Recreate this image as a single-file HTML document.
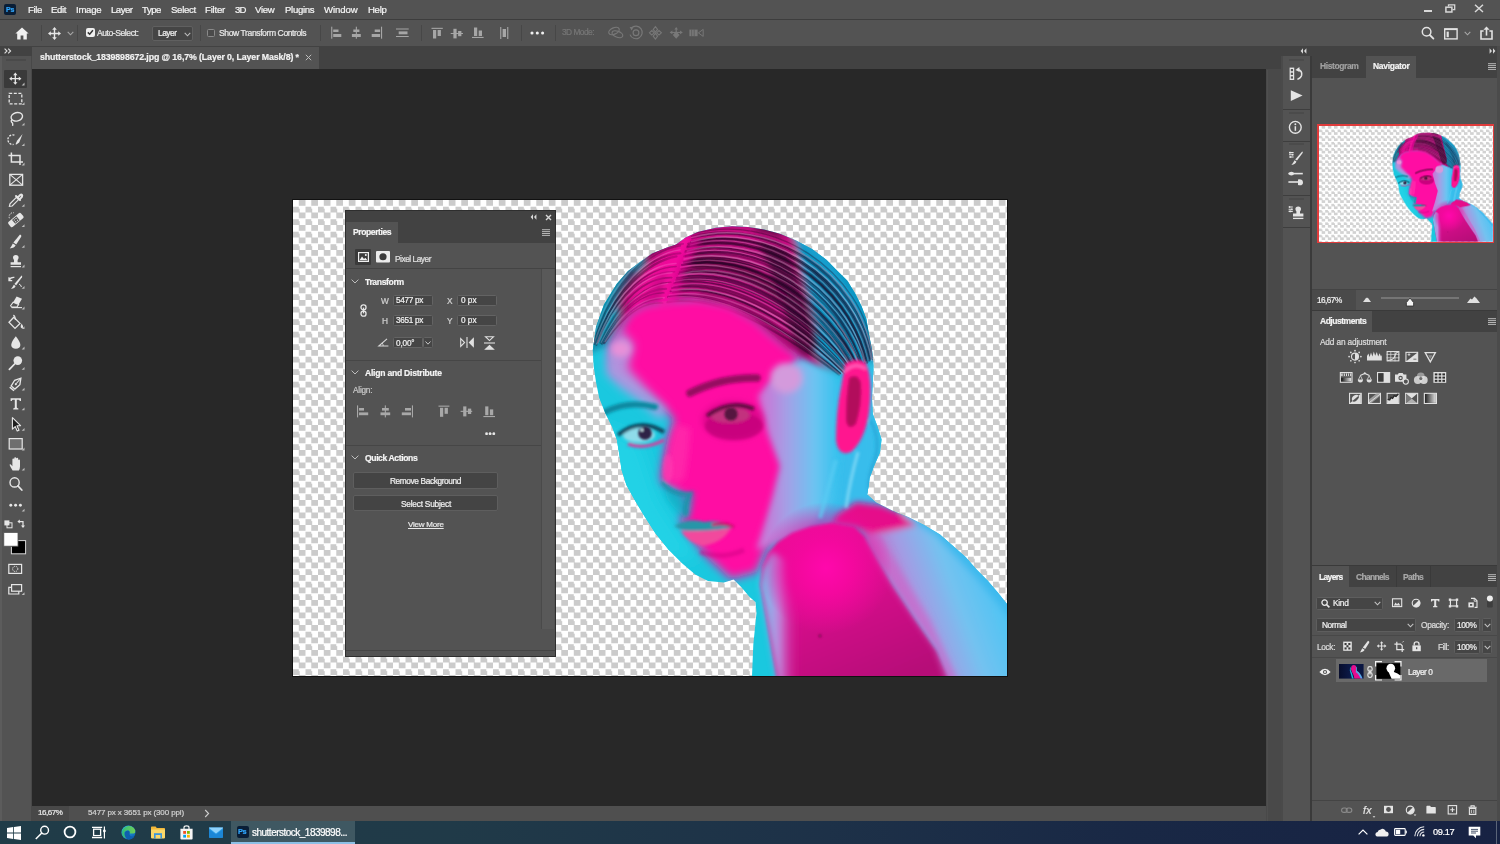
<!DOCTYPE html>
<html><head><meta charset="utf-8"><title>Photoshop</title>
<style>
*{box-sizing:border-box;margin:0;padding:0}
html,body{width:1500px;height:844px;overflow:hidden;background:#282828;font-family:"Liberation Sans","DejaVu Sans",sans-serif;font-size:9px;color:#e6e6e6}
.t{position:absolute;white-space:nowrap;display:block;will-change:transform}
.b{position:absolute}
svg{position:absolute;overflow:visible}

</style></head><body>
<svg style="left:293px;top:200px" width="714" height="476" viewBox="293 200 714 476">
<defs>
<clipPath id="sil"><path d="M592.8,350 L596,327 L604,304.6 L616.8,283.8 L628,271 L640.8,261.4 L652,253.4 L666.4,247.8 L676,244.6 L685.6,237.4 L698.4,231.8 L716,227.8 L732,226.2 L748,227 L764,229.4 L780,233.8 L796,240.5 L812,249 L826.4,259.8 L836,269.4 L847.2,280.6 L855.2,293.4 L861.6,306.2 L866.4,319 L868.8,333.4 L872,350 L873.6,366 L872.8,382 L872,398 L872.8,414 L877.6,426.8 L881.6,439.6 L880,452.4 L874.4,465.2 L869.6,478 L868.8,485 L867.2,494.6 L876,502.6 L892,510.6 L908,517 L924,525 L940,534.6 L952.8,545.8 L965.6,557 L976.8,569.8 L988,581 L997.6,592.2 L1007,604 L1007,676 L752,676 L753.3,644.7 L756.5,612.7 L755.5,602 L749.6,597 L741.6,587.4 L733.6,579.4 L724,582.6 L708,581 L695.2,574.6 L682.4,563.4 L668,549 L655.2,533 L644,515.4 L634.4,499.4 L626.4,485 L621.6,470 L619.2,454 L616.8,439.6 L612,426.8 L605.6,414 L599.2,398 L596,382 L593.6,366 Z"/></clipPath>
<clipPath id="hairclip"><path d="M580,352 L610,343 L628,315 L644,305 L670,300 L697,298 L729,304 L755,319 L772,334 L789,351 L802,368 L815,381 L836,398 L846,366 L862,356 L890,370 L890,210 L580,210 Z"/></clipPath>
<filter id="pb8" x="-20%" y="-20%" width="140%" height="140%"><feGaussianBlur stdDeviation="8"/></filter>
<filter id="pb5" x="-20%" y="-20%" width="140%" height="140%"><feGaussianBlur stdDeviation="5"/></filter>
<filter id="pb4" x="-20%" y="-20%" width="140%" height="140%"><feGaussianBlur stdDeviation="3.2"/></filter>
<filter id="pb2" x="-20%" y="-20%" width="140%" height="140%"><feGaussianBlur stdDeviation="1.5"/></filter>
<filter id="pb1" x="-20%" y="-20%" width="140%" height="140%"><feGaussianBlur stdDeviation="0.6"/></filter>
<filter id="pb1b" x="-30%" y="-30%" width="160%" height="160%"><feGaussianBlur stdDeviation="1.1"/></filter>
<radialGradient id="glow" cx="826" cy="568" r="66" gradientUnits="userSpaceOnUse"><stop offset="0" stop-color="#ff08ac"/><stop offset="0.4" stop-color="#f4089e"/><stop offset="1" stop-color="#f0089c" stop-opacity="0"/></radialGradient>
<linearGradient id="shg" x1="800" y1="520" x2="870" y2="690" gradientUnits="userSpaceOnUse"><stop offset="0" stop-color="#ee0898"/><stop offset="0.5" stop-color="#d4088a"/><stop offset="1" stop-color="#b60878"/></linearGradient>
<linearGradient id="cheek" x1="760" y1="0" x2="838" y2="0" gradientUnits="userSpaceOnUse"><stop offset="0" stop-color="#d070d4"/><stop offset="0.35" stop-color="#a3a0e6"/><stop offset="0.7" stop-color="#6cc4f2"/><stop offset="1" stop-color="#34c2ee"/></linearGradient>
<linearGradient id="backg" x1="880" y1="600" x2="990" y2="560" gradientUnits="userSpaceOnUse"><stop offset="0" stop-color="#d050b8"/><stop offset="0.3" stop-color="#a59ae3"/><stop offset="0.62" stop-color="#74c2f0"/><stop offset="1" stop-color="#4cc4f4"/></linearGradient>
<linearGradient id="lband" x1="762" y1="0" x2="800" y2="0" gradientUnits="userSpaceOnUse"><stop offset="0" stop-color="#6cc4f0"/><stop offset="0.45" stop-color="#c088dc"/><stop offset="1" stop-color="#e0088f" stop-opacity="0"/></linearGradient>
</defs>
<g id="photo" clip-path="url(#sil)">
<rect x="580" y="215" width="440" height="470" fill="#1ac8df"/>
<g filter="url(#pb8)">
 <path d="M815,385 L880,360 L890,520 L830,530 L790,540 Z" fill="#38bdec"/>
 <path d="M590,420 L640,440 L660,500 L700,560 L650,560 L600,470 Z" fill="#22d2e6"/>
</g>
<!-- hair -->
<g filter="url(#pb4)">
 <path d="M580,356 L610,345 L628,317 L644,307 L670,302 L697,300 L729,306 L755,321 L772,336 L789,350 L804,361 L820,369 L834,374 L846,366 L862,356 L890,370 L890,210 L580,210 Z" fill="#b80a7a"/>
 <path d="M788,210 L799,262 L808,300 L816,331 L812,350 L824,368 L838,376 L846,362 L890,362 L890,210 Z" fill="#0e93c0"/>
 <path d="M766,230 Q788,280 806,344" fill="none" stroke="#3a0832" stroke-width="24" opacity="0.72" stroke-linecap="round"/>
 <path d="M580,356 L610,345 L621,317 L621,295 L647,262 L636,238 L592,285 L578,340 Z" fill="#0c8fae"/>
 <path d="M664,303 L672,268 L687,238" fill="none" stroke="#f80aa0" stroke-width="9" stroke-linecap="round"/>
 <path d="M636,302 L652,274 L670,256" fill="none" stroke="#ea0a96" stroke-width="13" stroke-linecap="round"/>
 <path d="M700,237 Q745,225 796,250" fill="none" stroke="#cc0a86" stroke-width="8"/>
 <path d="M692,262 Q745,258 784,300" fill="none" stroke="#5e0640" stroke-width="15" opacity="0.7"/>
 <path d="M698,296 Q744,300 792,350" fill="none" stroke="#7a0852" stroke-width="12" opacity="0.65"/>
 <path d="M634,270 Q622,288 616,310" fill="none" stroke="#6a0848" stroke-width="8" opacity="0.55"/>
 <path d="M812,270 Q840,300 850,350" fill="none" stroke="#0a6088" stroke-width="10" opacity="0.6"/>
 <path d="M800,240 Q850,280 866,340" fill="none" stroke="#15a6d6" stroke-width="7" opacity="0.8"/>
</g>
<g fill="none" stroke-linecap="round" filter="url(#pb1)">
<path d="M667.0,302.5 C720.7,294.1 787.6,336.7 838.0,373.6" stroke="#1a0420" stroke-width="1.8" opacity="0.27"/>
<path d="M668.2,301.9 C721.7,291.8 789.6,338.2 838.8,374.4" stroke="#1a0420" stroke-width="2.6" opacity="0.26"/>
<path d="M668.2,297.0 C725.6,288.9 791.9,334.0 840.0,373.4" stroke="#1a0420" stroke-width="2.3" opacity="0.46"/>
<path d="M670.4,296.3 C727.4,287.8 793.7,333.5 839.9,373.3" stroke="#1a0420" stroke-width="2.3" opacity="0.30"/>
<path d="M672.8,292.7 C729.4,281.5 798.8,328.8 844.4,373.6" stroke="#1a0420" stroke-width="1.6" opacity="0.37"/>
<path d="M670.5,291.3 C728.9,280.1 798.4,327.8 842.6,371.6" stroke="#1a0420" stroke-width="1.7" opacity="0.51"/>
<path d="M671.9,288.1 C731.0,278.1 802.7,323.6 843.5,371.4" stroke="#1a0420" stroke-width="1.7" opacity="0.42"/>
<path d="M674.3,286.8 C733.8,276.0 803.6,323.2 847.1,372.2" stroke="#1a0420" stroke-width="2.3" opacity="0.37"/>
<path d="M674.1,283.1 C736.2,273.2 806.3,319.0 847.0,370.1" stroke="#1a0420" stroke-width="1.4" opacity="0.50"/>
<path d="M675.3,282.2 C735.5,268.9 809.4,316.6 849.6,369.0" stroke="#1a0420" stroke-width="1.2" opacity="0.54"/>
<path d="M676.5,280.3 C738.3,265.9 813.9,315.9 851.2,370.2" stroke="#1a0420" stroke-width="2.3" opacity="0.47"/>
<path d="M676.9,278.0 C738.2,264.1 813.4,312.6 851.2,370.4" stroke="#1a0420" stroke-width="1.8" opacity="0.53"/>
<path d="M678.9,273.8 C742.6,262.7 818.6,310.6 852.4,367.2" stroke="#1a0420" stroke-width="2.3" opacity="0.35"/>
<path d="M680.1,273.1 C743.0,260.8 820.2,307.2 852.2,366.7" stroke="#1a0420" stroke-width="2.5" opacity="0.49"/>
<path d="M679.6,271.5 C746.6,254.9 822.2,304.3 854.2,367.2" stroke="#1a0420" stroke-width="1.6" opacity="0.38"/>
<path d="M681.3,269.1 C746.1,255.0 825.0,303.9 856.7,366.8" stroke="#1a0420" stroke-width="1.9" opacity="0.41"/>
<path d="M682.2,265.0 C748.9,250.0 826.9,301.4 857.2,366.1" stroke="#1a0420" stroke-width="2.3" opacity="0.52"/>
<path d="M682.2,264.8 C749.8,249.6 828.9,299.3 857.9,366.9" stroke="#1a0420" stroke-width="2.2" opacity="0.51"/>
<path d="M683.9,262.8 C751.1,245.9 833.0,294.8 860.8,366.2" stroke="#1a0420" stroke-width="1.5" opacity="0.54"/>
<path d="M683.5,261.9 C754.0,242.7 833.7,294.6 859.9,363.5" stroke="#1a0420" stroke-width="1.6" opacity="0.47"/>
<path d="M683.8,256.3 C755.9,239.7 835.8,291.5 863.0,364.7" stroke="#1a0420" stroke-width="1.6" opacity="0.29"/>
<path d="M685.6,256.1 C755.5,236.4 840.0,289.2 861.7,364.5" stroke="#1a0420" stroke-width="2.1" opacity="0.49"/>
<path d="M685.1,252.1 C757.1,234.0 841.4,286.3 865.1,362.0" stroke="#1a0420" stroke-width="1.9" opacity="0.30"/>
<path d="M685.4,250.8 C758.2,233.7 843.9,284.3 865.1,363.5" stroke="#1a0420" stroke-width="1.3" opacity="0.50"/>
<path d="M687.5,247.1 C760.8,228.0 847.8,281.4 865.7,360.2" stroke="#1a0420" stroke-width="2.4" opacity="0.51"/>
<path d="M688.0,246.0 C762.6,227.1 848.0,280.1 867.0,362.4" stroke="#1a0420" stroke-width="2.6" opacity="0.41"/>
<path d="M688.4,243.8 C763.8,222.6 851.3,276.8 869.3,360.4" stroke="#1a0420" stroke-width="2.3" opacity="0.45"/>
<path d="M691.4,241.9 C766.1,223.2 852.9,276.2 870.5,358.5" stroke="#1a0420" stroke-width="2.4" opacity="0.52"/>
<path d="M692.0,238.5 C767.4,217.1 856.8,271.3 872.7,359.3" stroke="#1a0420" stroke-width="2.1" opacity="0.44"/>
<path d="M691.9,236.3 C770.8,217.1 858.9,271.0 873.0,357.4" stroke="#1a0420" stroke-width="2.2" opacity="0.33"/>
<path d="M693.4,233.7 C770.9,212.3 862.7,267.4 874.2,356.5" stroke="#1a0420" stroke-width="1.3" opacity="0.33"/>
<path d="M662.7,303.1 C644.4,301.7 625.8,311.7 604.8,343.2" stroke="#1a0420" stroke-width="1.4" opacity="0.37"/>
<path d="M662.2,298.2 C646.3,299.1 624.7,308.9 604.1,343.6" stroke="#1a0420" stroke-width="1.5" opacity="0.28"/>
<path d="M664.0,292.9 C645.7,292.1 622.4,306.4 603.2,343.5" stroke="#1a0420" stroke-width="1.2" opacity="0.32"/>
<path d="M666.3,288.7 C646.9,288.9 621.4,303.7 602.2,344.2" stroke="#1a0420" stroke-width="1.9" opacity="0.23"/>
<path d="M671.0,282.2 C647.7,282.2 621.7,302.2 601.3,343.7" stroke="#1a0420" stroke-width="1.3" opacity="0.32"/>
<path d="M671.8,277.6 C646.4,276.9 620.7,297.8 600.2,342.8" stroke="#1a0420" stroke-width="1.6" opacity="0.32"/>
<path d="M674.6,271.8 C647.4,270.8 616.8,294.1 598.3,342.3" stroke="#1a0420" stroke-width="1.5" opacity="0.21"/>
<path d="M676.2,266.5 C647.7,267.5 616.6,292.7 597.2,342.5" stroke="#1a0420" stroke-width="1.5" opacity="0.37"/>
<path d="M676.4,256.3 C649.2,261.5 614.4,289.3 594.4,343.8" stroke="#1a0420" stroke-width="2.3" opacity="0.34"/>
<path d="M680.5,253.3 C647.7,255.9 613.6,287.7 596.4,345.0" stroke="#1a0420" stroke-width="2.0" opacity="0.33"/>
<path d="M680.4,245.7 C649.5,250.7 611.4,282.7 593.9,343.2" stroke="#1a0420" stroke-width="1.6" opacity="0.26"/>
<path d="M683.5,243.8 C649.7,245.7 609.9,282.7 593.2,344.3" stroke="#1a0420" stroke-width="1.2" opacity="0.26"/>
<path d="M668.6,297.6 C723.3,289.4 792.6,333.6 840.0,374.6" stroke="#ffd0f4" stroke-width="1.3" opacity="0.27"/>
<path d="M669.4,295.1 C728.3,285.2 797.3,329.7 842.6,373.4" stroke="#ffd0f4" stroke-width="1.5" opacity="0.25"/>
<path d="M672.2,290.6 C731.8,281.0 801.8,325.3 843.9,371.6" stroke="#ffd0f4" stroke-width="1.7" opacity="0.33"/>
<path d="M672.9,286.1 C732.8,273.0 805.1,320.0 846.3,369.5" stroke="#ffd0f4" stroke-width="1.0" opacity="0.20"/>
<path d="M674.7,281.3 C736.2,268.9 812.5,317.3 849.8,369.0" stroke="#ffd0f4" stroke-width="1.3" opacity="0.21"/>
<path d="M679.0,275.8 C740.4,262.1 815.5,310.2 852.2,369.7" stroke="#ffd0f4" stroke-width="1.7" opacity="0.26"/>
<path d="M680.0,274.0 C744.5,257.9 820.7,306.1 852.4,368.9" stroke="#ffd0f4" stroke-width="1.5" opacity="0.26"/>
<path d="M680.4,267.2 C745.7,254.0 824.4,302.6 856.8,366.6" stroke="#ffd0f4" stroke-width="1.3" opacity="0.26"/>
<path d="M681.9,263.1 C752.5,247.7 830.1,296.0 858.8,363.8" stroke="#ffd0f4" stroke-width="1.2" opacity="0.19"/>
<path d="M684.1,259.1 C752.5,241.8 835.6,293.4 859.7,365.6" stroke="#ffd0f4" stroke-width="1.6" opacity="0.34"/>
<path d="M686.7,253.4 C758.4,236.7 839.7,288.8 864.7,362.3" stroke="#ffd0f4" stroke-width="1.1" opacity="0.26"/>
<path d="M687.4,251.0 C760.5,231.1 846.1,285.1 865.5,362.8" stroke="#ffd0f4" stroke-width="1.6" opacity="0.28"/>
<path d="M690.4,245.1 C763.6,224.4 849.9,279.1 868.3,359.8" stroke="#ffd0f4" stroke-width="1.4" opacity="0.18"/>
<path d="M691.5,241.8 C766.6,220.1 855.6,275.1 871.8,360.5" stroke="#ffd0f4" stroke-width="1.5" opacity="0.32"/>
<path d="M691.6,237.6 C769.7,216.0 861.4,269.9 872.6,358.4" stroke="#ffd0f4" stroke-width="1.5" opacity="0.30"/>
<path d="M664.4,297.7 C644.4,296.9 624.3,309.8 605.1,341.5" stroke="#ffd0f4" stroke-width="1.5" opacity="0.22"/>
<path d="M667.7,283.3 C645.3,286.1 620.7,304.0 601.2,342.2" stroke="#ffd0f4" stroke-width="1.3" opacity="0.18"/>
<path d="M672.0,272.8 C646.8,273.9 617.9,295.4 598.2,342.6" stroke="#ffd0f4" stroke-width="1.5" opacity="0.22"/>
<path d="M676.0,263.5 C649.3,264.4 615.2,291.0 596.8,343.7" stroke="#ffd0f4" stroke-width="1.6" opacity="0.28"/>
<path d="M680.2,249.8 C650.0,253.5 614.1,286.1 593.9,343.3" stroke="#ffd0f4" stroke-width="1.2" opacity="0.25"/>
<path d="M683.8,239.3 C650.5,245.3 609.2,278.6 591.5,344.8" stroke="#ffd0f4" stroke-width="1.4" opacity="0.18"/>
</g>

<g filter="url(#pb4)">
 <path d="M672,300 L680,268 L695,240" fill="none" stroke="#f40a9e" stroke-width="10" stroke-linecap="round" opacity="0.6"/>
 <path d="M652,296 L662,272 L676,254" fill="none" stroke="#f40a9e" stroke-width="9" stroke-linecap="round" opacity="0.45"/>
</g>
<!-- face -->
<g filter="url(#pb5)">
 <path d="M610,347 L629,313 L644,304 L670,300 L697,298 L729,304 L755,319 L772,334 L789,348 L802,358 L770,392 L778,434 L788,466 L782,498 L774,519 L767,546 L757,572 L731,579 L706,556 L691,536 L680,519 L687,511 L682,494 L661,481 L663,464 L667,440 L674,419 L652,400 L635,389 L612,372 Z" fill="#ff0aa3"/>
</g>
<g filter="url(#pb5)">
 <path d="M606,352 L622,330 L634,345 L628,368 L650,392 L668,410 L660,420 L640,402 L620,388 L606,374 Z" fill="#a8a4e6" opacity="0.85"/>
</g>
<g filter="url(#pb4)">
 <path d="M802,360 L820,368 L838,376 L840,455 L836,500 L804,534 L756,550 L766,519 L772,498 L780,466 L768,434 L758,396 L782,366 Z" fill="url(#cheek)"/>
 <ellipse cx="621" cy="349" rx="10" ry="8" fill="#e890d8"/>
 <ellipse cx="786" cy="378" rx="16" ry="15" fill="#d49adc"/>
</g>
<g filter="url(#pb4)">
 <ellipse cx="733" cy="420" rx="31" ry="19" fill="#c40a7a" opacity="0.5"/>
 <path d="M676,424 Q668,452 664,478 Q672,486 684,480 Q690,452 690,428 Z" fill="#ff2cac" opacity="0.7"/>
 <path d="M662,484 Q676,498 694,492 Q692,508 688,520 Q676,512 668,500 Z" fill="#12a9c0" opacity="0.7"/>
</g>
<!-- body -->
<g filter="url(#pb4)">
 <path d="M862,530 L900,512 L930,524 L968,556 L1015,600 L1015,690 L950,690 L935,649 L913,617 L892,585 L877,560 Z" fill="url(#backg)"/>
 <path d="M838,514 L856,502 L880,505 L906,515 L920,524 L900,529 L872,534 L854,527 L832,523.5 Z" fill="#e6088a"/>
 <path d="M900,506 L930,518 L972,552 L1015,598 L1015,624 L975,577 L935,535 L905,518 Z" fill="#3cb9ee"/>
</g>
<g filter="url(#pb2)">
 <path d="M762,566 L768,553 L778,542 L792,533 L811,526.5 L832,523 L854,526.5 L864,536 L879,562 L894,587 L915,619 L937,651 L954,690 L779,690 L764,607 L760,585 Z" fill="url(#shg)"/>
</g>
<g filter="url(#pb4)">
 <path d="M763,568 L772,552 L786,560 L788,585 L802,628 L812,690 L779,690 L764,607 L760,585 Z" fill="url(#lband)"/>
 <path d="M866,538 L880,536 L900,570 L930,620 L962,690 L950,690 L935,649 L913,617 L892,585 L877,560 Z" fill="#c86ccc" opacity="0.8"/>
</g>
<ellipse cx="826" cy="568" rx="66" ry="66" fill="url(#glow)"/>
<!-- details -->
<g filter="url(#pb2)">
 <path d="M845,364 Q857,356 866,363 Q873,380 869,412 Q865,440 851,452 Q838,457 836,440 Q836,412 841,388 Z" fill="#ff128f"/>
 <path d="M849,378 Q858,372 861,384 Q862,405 856,424 Q848,432 846,420 Q846,396 849,378 Z" fill="#b20a5c"/>
 <path d="M844,372 Q855,361 866,369" fill="none" stroke="#ff5cb8" stroke-width="3"/>
 <ellipse cx="734" cy="426" rx="29" ry="14" fill="#c00878" opacity="0.75"/>
 <path d="M690,393 Q722,377 757,378" fill="none" stroke="#960a60" stroke-width="7.5" stroke-linecap="round"/>
 <path d="M605,412 Q628,400 655,407" fill="none" stroke="#0f88a0" stroke-width="6" stroke-linecap="round"/>
 <ellipse cx="639" cy="435" rx="16" ry="7.5" fill="#8fdcea"/>
 <path d="M618,435 Q640,417 664,432" fill="none" stroke="#083c54" stroke-width="4"/>
 <path d="M628,444 Q646,450 664,440" fill="none" stroke="#e83098" stroke-width="3"/>
 <ellipse cx="730" cy="415" rx="20" ry="8" fill="#c2307e"/>
 <path d="M707,416 Q730,399 754,409" fill="none" stroke="#5a0a3c" stroke-width="4"/>
 <path d="M662,482 Q672,496 690,494 Q684,505 686,516" fill="none" stroke="#0e93a6" stroke-width="4" opacity="0.8"/>
 <ellipse cx="668" cy="468" rx="5" ry="14" fill="#ff3cb2" opacity="0.6"/>
 <path d="M674,526 Q690,517 704,522 Q720,519 734,527 Q716,532 700,531 Q686,533 674,526 Z" fill="#2596a8"/>
 <path d="M681,531 Q700,532 731,528 Q724,542 703,546 Q688,543 681,531 Z" fill="#f2499d"/>
 <path d="M712,525 Q724,522 734,527" fill="none" stroke="#c8106c" stroke-width="3"/>
 <path d="M700,552 Q722,560 744,550" fill="none" stroke="#d00a84" stroke-width="5" opacity="0.5"/>
 <path d="M870,420 Q882,440 874,462 Q867,478 870,494" fill="none" stroke="#2aa6d8" stroke-width="3" opacity="0.9"/>
 <path d="M858,452 Q850,480 846,508" fill="none" stroke="#8adcf8" stroke-width="3" opacity="0.8"/>
 <path d="M836,460 Q828,490 820,518" fill="none" stroke="#58ccf4" stroke-width="4" opacity="0.7"/>
</g>
<g filter="url(#pb1b)">
 <circle cx="645" cy="433" r="6.8" fill="#2e2246"/>
 <circle cx="731" cy="414" r="6.6" fill="#57123f"/>
 <circle cx="642" cy="430" r="1.5" fill="#d8f4fa"/>
 <circle cx="820" cy="636" r="1.4" fill="#7a0a50"/>
</g>
</g>
</svg>

<div class="b" style="left:0px;top:0px;width:1500px;height:19px;background:#535353;"></div>
<div class="b" style="left:0px;top:19px;width:1500px;height:1px;background:#3d3d3d;"></div>
<div class="b" style="left:0px;top:20px;width:1500px;height:26px;background:#535353;"></div>
<div class="b" style="left:0px;top:46px;width:1500px;height:23px;background:#424242;"></div>
<div class="b" style="left:32px;top:69px;width:1234px;height:737px;background:#282828;"></div>
<div class="b" style="left:292px;top:199px;width:716px;height:478px;background:#111;"></div>
<div class="b" style="left:293px;top:200px;width:714px;height:476px;background:#fff;background:repeating-conic-gradient(#cbcbcb 0% 25%,#ffffff 0% 50%) 0 0/12.5px 12.5px;"></div>
<svg style="left:293px;top:200px" width="714" height="476" viewBox="293 200 714 476">
<defs>
<clipPath id="sil"><path d="M592.8,350 L596,327 L604,304.6 L616.8,283.8 L628,271 L640.8,261.4 L652,253.4 L666.4,247.8 L676,244.6 L685.6,237.4 L698.4,231.8 L716,227.8 L732,226.2 L748,227 L764,229.4 L780,233.8 L796,240.5 L812,249 L826.4,259.8 L836,269.4 L847.2,280.6 L855.2,293.4 L861.6,306.2 L866.4,319 L868.8,333.4 L872,350 L873.6,366 L872.8,382 L872,398 L872.8,414 L877.6,426.8 L881.6,439.6 L880,452.4 L874.4,465.2 L869.6,478 L868.8,485 L867.2,494.6 L876,502.6 L892,510.6 L908,517 L924,525 L940,534.6 L952.8,545.8 L965.6,557 L976.8,569.8 L988,581 L997.6,592.2 L1007,604 L1007,676 L752,676 L753.3,644.7 L756.5,612.7 L755.5,602 L749.6,597 L741.6,587.4 L733.6,579.4 L724,582.6 L708,581 L695.2,574.6 L682.4,563.4 L668,549 L655.2,533 L644,515.4 L634.4,499.4 L626.4,485 L621.6,470 L619.2,454 L616.8,439.6 L612,426.8 L605.6,414 L599.2,398 L596,382 L593.6,366 Z"/></clipPath>
<clipPath id="hairclip"><path d="M580,352 L610,343 L628,315 L644,305 L670,300 L697,298 L729,304 L755,319 L772,334 L789,351 L802,368 L815,381 L836,398 L846,366 L862,356 L890,370 L890,210 L580,210 Z"/></clipPath>
<filter id="pb8" x="-20%" y="-20%" width="140%" height="140%"><feGaussianBlur stdDeviation="8"/></filter>
<filter id="pb5" x="-20%" y="-20%" width="140%" height="140%"><feGaussianBlur stdDeviation="5"/></filter>
<filter id="pb4" x="-20%" y="-20%" width="140%" height="140%"><feGaussianBlur stdDeviation="3.2"/></filter>
<filter id="pb2" x="-20%" y="-20%" width="140%" height="140%"><feGaussianBlur stdDeviation="1.5"/></filter>
<filter id="pb1" x="-20%" y="-20%" width="140%" height="140%"><feGaussianBlur stdDeviation="0.6"/></filter>
<filter id="pb1b" x="-30%" y="-30%" width="160%" height="160%"><feGaussianBlur stdDeviation="1.1"/></filter>
<radialGradient id="glow" cx="826" cy="568" r="66" gradientUnits="userSpaceOnUse"><stop offset="0" stop-color="#ff08ac"/><stop offset="0.4" stop-color="#f4089e"/><stop offset="1" stop-color="#f0089c" stop-opacity="0"/></radialGradient>
<linearGradient id="shg" x1="800" y1="520" x2="870" y2="690" gradientUnits="userSpaceOnUse"><stop offset="0" stop-color="#ee0898"/><stop offset="0.5" stop-color="#d4088a"/><stop offset="1" stop-color="#b60878"/></linearGradient>
<linearGradient id="cheek" x1="760" y1="0" x2="838" y2="0" gradientUnits="userSpaceOnUse"><stop offset="0" stop-color="#d070d4"/><stop offset="0.35" stop-color="#a3a0e6"/><stop offset="0.7" stop-color="#6cc4f2"/><stop offset="1" stop-color="#34c2ee"/></linearGradient>
<linearGradient id="backg" x1="880" y1="600" x2="990" y2="560" gradientUnits="userSpaceOnUse"><stop offset="0" stop-color="#d050b8"/><stop offset="0.3" stop-color="#a59ae3"/><stop offset="0.62" stop-color="#74c2f0"/><stop offset="1" stop-color="#4cc4f4"/></linearGradient>
<linearGradient id="lband" x1="762" y1="0" x2="800" y2="0" gradientUnits="userSpaceOnUse"><stop offset="0" stop-color="#6cc4f0"/><stop offset="0.45" stop-color="#c088dc"/><stop offset="1" stop-color="#e0088f" stop-opacity="0"/></linearGradient>
</defs>
<g id="photo" clip-path="url(#sil)">
<rect x="580" y="215" width="440" height="470" fill="#1ac8df"/>
<g filter="url(#pb8)">
 <path d="M815,385 L880,360 L890,520 L830,530 L790,540 Z" fill="#38bdec"/>
 <path d="M590,420 L640,440 L660,500 L700,560 L650,560 L600,470 Z" fill="#22d2e6"/>
</g>
<!-- hair -->
<g filter="url(#pb4)">
 <path d="M580,356 L610,345 L628,317 L644,307 L670,302 L697,300 L729,306 L755,321 L772,336 L789,350 L804,361 L820,369 L834,374 L846,366 L862,356 L890,370 L890,210 L580,210 Z" fill="#b80a7a"/>
 <path d="M788,210 L799,262 L808,300 L816,331 L812,350 L824,368 L838,376 L846,362 L890,362 L890,210 Z" fill="#0e93c0"/>
 <path d="M766,230 Q788,280 806,344" fill="none" stroke="#3a0832" stroke-width="24" opacity="0.72" stroke-linecap="round"/>
 <path d="M580,356 L610,345 L621,317 L621,295 L647,262 L636,238 L592,285 L578,340 Z" fill="#0c8fae"/>
 <path d="M664,303 L672,268 L687,238" fill="none" stroke="#f80aa0" stroke-width="9" stroke-linecap="round"/>
 <path d="M636,302 L652,274 L670,256" fill="none" stroke="#ea0a96" stroke-width="13" stroke-linecap="round"/>
 <path d="M700,237 Q745,225 796,250" fill="none" stroke="#cc0a86" stroke-width="8"/>
 <path d="M692,262 Q745,258 784,300" fill="none" stroke="#5e0640" stroke-width="15" opacity="0.7"/>
 <path d="M698,296 Q744,300 792,350" fill="none" stroke="#7a0852" stroke-width="12" opacity="0.65"/>
 <path d="M634,270 Q622,288 616,310" fill="none" stroke="#6a0848" stroke-width="8" opacity="0.55"/>
 <path d="M812,270 Q840,300 850,350" fill="none" stroke="#0a6088" stroke-width="10" opacity="0.6"/>
 <path d="M800,240 Q850,280 866,340" fill="none" stroke="#15a6d6" stroke-width="7" opacity="0.8"/>
</g>
<g fill="none" stroke-linecap="round" filter="url(#pb1)">
<path d="M667.0,302.5 C720.7,294.1 787.6,336.7 838.0,373.6" stroke="#1a0420" stroke-width="1.8" opacity="0.27"/>
<path d="M668.2,301.9 C721.7,291.8 789.6,338.2 838.8,374.4" stroke="#1a0420" stroke-width="2.6" opacity="0.26"/>
<path d="M668.2,297.0 C725.6,288.9 791.9,334.0 840.0,373.4" stroke="#1a0420" stroke-width="2.3" opacity="0.46"/>
<path d="M670.4,296.3 C727.4,287.8 793.7,333.5 839.9,373.3" stroke="#1a0420" stroke-width="2.3" opacity="0.30"/>
<path d="M672.8,292.7 C729.4,281.5 798.8,328.8 844.4,373.6" stroke="#1a0420" stroke-width="1.6" opacity="0.37"/>
<path d="M670.5,291.3 C728.9,280.1 798.4,327.8 842.6,371.6" stroke="#1a0420" stroke-width="1.7" opacity="0.51"/>
<path d="M671.9,288.1 C731.0,278.1 802.7,323.6 843.5,371.4" stroke="#1a0420" stroke-width="1.7" opacity="0.42"/>
<path d="M674.3,286.8 C733.8,276.0 803.6,323.2 847.1,372.2" stroke="#1a0420" stroke-width="2.3" opacity="0.37"/>
<path d="M674.1,283.1 C736.2,273.2 806.3,319.0 847.0,370.1" stroke="#1a0420" stroke-width="1.4" opacity="0.50"/>
<path d="M675.3,282.2 C735.5,268.9 809.4,316.6 849.6,369.0" stroke="#1a0420" stroke-width="1.2" opacity="0.54"/>
<path d="M676.5,280.3 C738.3,265.9 813.9,315.9 851.2,370.2" stroke="#1a0420" stroke-width="2.3" opacity="0.47"/>
<path d="M676.9,278.0 C738.2,264.1 813.4,312.6 851.2,370.4" stroke="#1a0420" stroke-width="1.8" opacity="0.53"/>
<path d="M678.9,273.8 C742.6,262.7 818.6,310.6 852.4,367.2" stroke="#1a0420" stroke-width="2.3" opacity="0.35"/>
<path d="M680.1,273.1 C743.0,260.8 820.2,307.2 852.2,366.7" stroke="#1a0420" stroke-width="2.5" opacity="0.49"/>
<path d="M679.6,271.5 C746.6,254.9 822.2,304.3 854.2,367.2" stroke="#1a0420" stroke-width="1.6" opacity="0.38"/>
<path d="M681.3,269.1 C746.1,255.0 825.0,303.9 856.7,366.8" stroke="#1a0420" stroke-width="1.9" opacity="0.41"/>
<path d="M682.2,265.0 C748.9,250.0 826.9,301.4 857.2,366.1" stroke="#1a0420" stroke-width="2.3" opacity="0.52"/>
<path d="M682.2,264.8 C749.8,249.6 828.9,299.3 857.9,366.9" stroke="#1a0420" stroke-width="2.2" opacity="0.51"/>
<path d="M683.9,262.8 C751.1,245.9 833.0,294.8 860.8,366.2" stroke="#1a0420" stroke-width="1.5" opacity="0.54"/>
<path d="M683.5,261.9 C754.0,242.7 833.7,294.6 859.9,363.5" stroke="#1a0420" stroke-width="1.6" opacity="0.47"/>
<path d="M683.8,256.3 C755.9,239.7 835.8,291.5 863.0,364.7" stroke="#1a0420" stroke-width="1.6" opacity="0.29"/>
<path d="M685.6,256.1 C755.5,236.4 840.0,289.2 861.7,364.5" stroke="#1a0420" stroke-width="2.1" opacity="0.49"/>
<path d="M685.1,252.1 C757.1,234.0 841.4,286.3 865.1,362.0" stroke="#1a0420" stroke-width="1.9" opacity="0.30"/>
<path d="M685.4,250.8 C758.2,233.7 843.9,284.3 865.1,363.5" stroke="#1a0420" stroke-width="1.3" opacity="0.50"/>
<path d="M687.5,247.1 C760.8,228.0 847.8,281.4 865.7,360.2" stroke="#1a0420" stroke-width="2.4" opacity="0.51"/>
<path d="M688.0,246.0 C762.6,227.1 848.0,280.1 867.0,362.4" stroke="#1a0420" stroke-width="2.6" opacity="0.41"/>
<path d="M688.4,243.8 C763.8,222.6 851.3,276.8 869.3,360.4" stroke="#1a0420" stroke-width="2.3" opacity="0.45"/>
<path d="M691.4,241.9 C766.1,223.2 852.9,276.2 870.5,358.5" stroke="#1a0420" stroke-width="2.4" opacity="0.52"/>
<path d="M692.0,238.5 C767.4,217.1 856.8,271.3 872.7,359.3" stroke="#1a0420" stroke-width="2.1" opacity="0.44"/>
<path d="M691.9,236.3 C770.8,217.1 858.9,271.0 873.0,357.4" stroke="#1a0420" stroke-width="2.2" opacity="0.33"/>
<path d="M693.4,233.7 C770.9,212.3 862.7,267.4 874.2,356.5" stroke="#1a0420" stroke-width="1.3" opacity="0.33"/>
<path d="M662.7,303.1 C644.4,301.7 625.8,311.7 604.8,343.2" stroke="#1a0420" stroke-width="1.4" opacity="0.37"/>
<path d="M662.2,298.2 C646.3,299.1 624.7,308.9 604.1,343.6" stroke="#1a0420" stroke-width="1.5" opacity="0.28"/>
<path d="M664.0,292.9 C645.7,292.1 622.4,306.4 603.2,343.5" stroke="#1a0420" stroke-width="1.2" opacity="0.32"/>
<path d="M666.3,288.7 C646.9,288.9 621.4,303.7 602.2,344.2" stroke="#1a0420" stroke-width="1.9" opacity="0.23"/>
<path d="M671.0,282.2 C647.7,282.2 621.7,302.2 601.3,343.7" stroke="#1a0420" stroke-width="1.3" opacity="0.32"/>
<path d="M671.8,277.6 C646.4,276.9 620.7,297.8 600.2,342.8" stroke="#1a0420" stroke-width="1.6" opacity="0.32"/>
<path d="M674.6,271.8 C647.4,270.8 616.8,294.1 598.3,342.3" stroke="#1a0420" stroke-width="1.5" opacity="0.21"/>
<path d="M676.2,266.5 C647.7,267.5 616.6,292.7 597.2,342.5" stroke="#1a0420" stroke-width="1.5" opacity="0.37"/>
<path d="M676.4,256.3 C649.2,261.5 614.4,289.3 594.4,343.8" stroke="#1a0420" stroke-width="2.3" opacity="0.34"/>
<path d="M680.5,253.3 C647.7,255.9 613.6,287.7 596.4,345.0" stroke="#1a0420" stroke-width="2.0" opacity="0.33"/>
<path d="M680.4,245.7 C649.5,250.7 611.4,282.7 593.9,343.2" stroke="#1a0420" stroke-width="1.6" opacity="0.26"/>
<path d="M683.5,243.8 C649.7,245.7 609.9,282.7 593.2,344.3" stroke="#1a0420" stroke-width="1.2" opacity="0.26"/>
<path d="M668.6,297.6 C723.3,289.4 792.6,333.6 840.0,374.6" stroke="#ffd0f4" stroke-width="1.3" opacity="0.27"/>
<path d="M669.4,295.1 C728.3,285.2 797.3,329.7 842.6,373.4" stroke="#ffd0f4" stroke-width="1.5" opacity="0.25"/>
<path d="M672.2,290.6 C731.8,281.0 801.8,325.3 843.9,371.6" stroke="#ffd0f4" stroke-width="1.7" opacity="0.33"/>
<path d="M672.9,286.1 C732.8,273.0 805.1,320.0 846.3,369.5" stroke="#ffd0f4" stroke-width="1.0" opacity="0.20"/>
<path d="M674.7,281.3 C736.2,268.9 812.5,317.3 849.8,369.0" stroke="#ffd0f4" stroke-width="1.3" opacity="0.21"/>
<path d="M679.0,275.8 C740.4,262.1 815.5,310.2 852.2,369.7" stroke="#ffd0f4" stroke-width="1.7" opacity="0.26"/>
<path d="M680.0,274.0 C744.5,257.9 820.7,306.1 852.4,368.9" stroke="#ffd0f4" stroke-width="1.5" opacity="0.26"/>
<path d="M680.4,267.2 C745.7,254.0 824.4,302.6 856.8,366.6" stroke="#ffd0f4" stroke-width="1.3" opacity="0.26"/>
<path d="M681.9,263.1 C752.5,247.7 830.1,296.0 858.8,363.8" stroke="#ffd0f4" stroke-width="1.2" opacity="0.19"/>
<path d="M684.1,259.1 C752.5,241.8 835.6,293.4 859.7,365.6" stroke="#ffd0f4" stroke-width="1.6" opacity="0.34"/>
<path d="M686.7,253.4 C758.4,236.7 839.7,288.8 864.7,362.3" stroke="#ffd0f4" stroke-width="1.1" opacity="0.26"/>
<path d="M687.4,251.0 C760.5,231.1 846.1,285.1 865.5,362.8" stroke="#ffd0f4" stroke-width="1.6" opacity="0.28"/>
<path d="M690.4,245.1 C763.6,224.4 849.9,279.1 868.3,359.8" stroke="#ffd0f4" stroke-width="1.4" opacity="0.18"/>
<path d="M691.5,241.8 C766.6,220.1 855.6,275.1 871.8,360.5" stroke="#ffd0f4" stroke-width="1.5" opacity="0.32"/>
<path d="M691.6,237.6 C769.7,216.0 861.4,269.9 872.6,358.4" stroke="#ffd0f4" stroke-width="1.5" opacity="0.30"/>
<path d="M664.4,297.7 C644.4,296.9 624.3,309.8 605.1,341.5" stroke="#ffd0f4" stroke-width="1.5" opacity="0.22"/>
<path d="M667.7,283.3 C645.3,286.1 620.7,304.0 601.2,342.2" stroke="#ffd0f4" stroke-width="1.3" opacity="0.18"/>
<path d="M672.0,272.8 C646.8,273.9 617.9,295.4 598.2,342.6" stroke="#ffd0f4" stroke-width="1.5" opacity="0.22"/>
<path d="M676.0,263.5 C649.3,264.4 615.2,291.0 596.8,343.7" stroke="#ffd0f4" stroke-width="1.6" opacity="0.28"/>
<path d="M680.2,249.8 C650.0,253.5 614.1,286.1 593.9,343.3" stroke="#ffd0f4" stroke-width="1.2" opacity="0.25"/>
<path d="M683.8,239.3 C650.5,245.3 609.2,278.6 591.5,344.8" stroke="#ffd0f4" stroke-width="1.4" opacity="0.18"/>
</g>

<g filter="url(#pb4)">
 <path d="M672,300 L680,268 L695,240" fill="none" stroke="#f40a9e" stroke-width="10" stroke-linecap="round" opacity="0.6"/>
 <path d="M652,296 L662,272 L676,254" fill="none" stroke="#f40a9e" stroke-width="9" stroke-linecap="round" opacity="0.45"/>
</g>
<!-- face -->
<g filter="url(#pb5)">
 <path d="M610,347 L629,313 L644,304 L670,300 L697,298 L729,304 L755,319 L772,334 L789,348 L802,358 L770,392 L778,434 L788,466 L782,498 L774,519 L767,546 L757,572 L731,579 L706,556 L691,536 L680,519 L687,511 L682,494 L661,481 L663,464 L667,440 L674,419 L652,400 L635,389 L612,372 Z" fill="#ff0aa3"/>
</g>
<g filter="url(#pb5)">
 <path d="M606,352 L622,330 L634,345 L628,368 L650,392 L668,410 L660,420 L640,402 L620,388 L606,374 Z" fill="#a8a4e6" opacity="0.85"/>
</g>
<g filter="url(#pb4)">
 <path d="M802,360 L820,368 L838,376 L840,455 L836,500 L804,534 L756,550 L766,519 L772,498 L780,466 L768,434 L758,396 L782,366 Z" fill="url(#cheek)"/>
 <ellipse cx="621" cy="349" rx="10" ry="8" fill="#e890d8"/>
 <ellipse cx="786" cy="378" rx="16" ry="15" fill="#d49adc"/>
</g>
<g filter="url(#pb4)">
 <ellipse cx="733" cy="420" rx="31" ry="19" fill="#c40a7a" opacity="0.5"/>
 <path d="M676,424 Q668,452 664,478 Q672,486 684,480 Q690,452 690,428 Z" fill="#ff2cac" opacity="0.7"/>
 <path d="M662,484 Q676,498 694,492 Q692,508 688,520 Q676,512 668,500 Z" fill="#12a9c0" opacity="0.7"/>
</g>
<!-- body -->
<g filter="url(#pb4)">
 <path d="M862,530 L900,512 L930,524 L968,556 L1015,600 L1015,690 L950,690 L935,649 L913,617 L892,585 L877,560 Z" fill="url(#backg)"/>
 <path d="M838,514 L856,502 L880,505 L906,515 L920,524 L900,529 L872,534 L854,527 L832,523.5 Z" fill="#e6088a"/>
 <path d="M900,506 L930,518 L972,552 L1015,598 L1015,624 L975,577 L935,535 L905,518 Z" fill="#3cb9ee"/>
</g>
<g filter="url(#pb2)">
 <path d="M762,566 L768,553 L778,542 L792,533 L811,526.5 L832,523 L854,526.5 L864,536 L879,562 L894,587 L915,619 L937,651 L954,690 L779,690 L764,607 L760,585 Z" fill="url(#shg)"/>
</g>
<g filter="url(#pb4)">
 <path d="M763,568 L772,552 L786,560 L788,585 L802,628 L812,690 L779,690 L764,607 L760,585 Z" fill="url(#lband)"/>
 <path d="M866,538 L880,536 L900,570 L930,620 L962,690 L950,690 L935,649 L913,617 L892,585 L877,560 Z" fill="#c86ccc" opacity="0.8"/>
</g>
<ellipse cx="826" cy="568" rx="66" ry="66" fill="url(#glow)"/>
<!-- details -->
<g filter="url(#pb2)">
 <path d="M845,364 Q857,356 866,363 Q873,380 869,412 Q865,440 851,452 Q838,457 836,440 Q836,412 841,388 Z" fill="#ff128f"/>
 <path d="M849,378 Q858,372 861,384 Q862,405 856,424 Q848,432 846,420 Q846,396 849,378 Z" fill="#b20a5c"/>
 <path d="M844,372 Q855,361 866,369" fill="none" stroke="#ff5cb8" stroke-width="3"/>
 <ellipse cx="734" cy="426" rx="29" ry="14" fill="#c00878" opacity="0.75"/>
 <path d="M690,393 Q722,377 757,378" fill="none" stroke="#960a60" stroke-width="7.5" stroke-linecap="round"/>
 <path d="M605,412 Q628,400 655,407" fill="none" stroke="#0f88a0" stroke-width="6" stroke-linecap="round"/>
 <ellipse cx="639" cy="435" rx="16" ry="7.5" fill="#8fdcea"/>
 <path d="M618,435 Q640,417 664,432" fill="none" stroke="#083c54" stroke-width="4"/>
 <path d="M628,444 Q646,450 664,440" fill="none" stroke="#e83098" stroke-width="3"/>
 <ellipse cx="730" cy="415" rx="20" ry="8" fill="#c2307e"/>
 <path d="M707,416 Q730,399 754,409" fill="none" stroke="#5a0a3c" stroke-width="4"/>
 <path d="M662,482 Q672,496 690,494 Q684,505 686,516" fill="none" stroke="#0e93a6" stroke-width="4" opacity="0.8"/>
 <ellipse cx="668" cy="468" rx="5" ry="14" fill="#ff3cb2" opacity="0.6"/>
 <path d="M674,526 Q690,517 704,522 Q720,519 734,527 Q716,532 700,531 Q686,533 674,526 Z" fill="#2596a8"/>
 <path d="M681,531 Q700,532 731,528 Q724,542 703,546 Q688,543 681,531 Z" fill="#f2499d"/>
 <path d="M712,525 Q724,522 734,527" fill="none" stroke="#c8106c" stroke-width="3"/>
 <path d="M700,552 Q722,560 744,550" fill="none" stroke="#d00a84" stroke-width="5" opacity="0.5"/>
 <path d="M870,420 Q882,440 874,462 Q867,478 870,494" fill="none" stroke="#2aa6d8" stroke-width="3" opacity="0.9"/>
 <path d="M858,452 Q850,480 846,508" fill="none" stroke="#8adcf8" stroke-width="3" opacity="0.8"/>
 <path d="M836,460 Q828,490 820,518" fill="none" stroke="#58ccf4" stroke-width="4" opacity="0.7"/>
</g>
<g filter="url(#pb1b)">
 <circle cx="645" cy="433" r="6.8" fill="#2e2246"/>
 <circle cx="731" cy="414" r="6.6" fill="#57123f"/>
 <circle cx="642" cy="430" r="1.5" fill="#d8f4fa"/>
 <circle cx="820" cy="636" r="1.4" fill="#7a0a50"/>
</g>
</g>
</svg>

<div class="b" style="left:1266px;top:69px;width:15px;height:752px;background:#494949;"></div>
<div class="b" style="left:1267px;top:70px;width:1px;height:751px;background:#4f4f4f;"></div>
<div class="b" style="left:32px;top:806px;width:1234px;height:15px;background:#4f4f4f;"></div>
<div class="b" style="left:32px;top:806px;width:37px;height:15px;background:#484848;"></div>
<span class="t" style="left:38.00px;top:809.26px;font-size:8.00px;line-height:8.00px;color:#e8e8e8;-webkit-text-stroke:0.22px #e8e8e8;letter-spacing:-0.439px;">16,67%</span>
<span class="t" style="left:88.00px;top:809.26px;font-size:8.00px;line-height:8.00px;color:#d0d0d0;-webkit-text-stroke:0.22px #d0d0d0;letter-spacing:-0.118px;">5477 px x 3651 px (300 ppi)</span>
<svg style="left:204px;top:809px" width="6" height="9" viewBox="0 0 6 9"><path d="M1.2 1 L4.6 4.5 L1.2 8" fill="none" stroke="#cfcfcf" stroke-width="1.1"/></svg>
<div class="b" style="left:0px;top:46px;width:32px;height:10px;background:#424242;"></div>
<div class="b" style="left:0px;top:56px;width:32px;height:765px;background:#535353;"></div>
<div class="b" style="left:0px;top:56px;width:2px;height:765px;background:#5c5c5c;"></div>
<div class="b" style="left:31px;top:56px;width:1px;height:765px;background:#484848;"></div>
<div class="b" style="left:6px;top:59px;width:20px;height:2px;background:#4a4a4a;"></div>
<svg style="left:4px;top:48px" width="8" height="6" viewBox="0 0 8 6"><path d="M0.6 0.6 L3 3 L0.6 5.4 M4.2 0.6 L6.6 3 L4.2 5.4" fill="none" stroke="#e0e0e0" stroke-width="1.1"/></svg>
<div class="b" style="left:32px;top:47px;width:287px;height:22px;background:#535353;"></div>
<span class="t" style="left:40.00px;top:52.54px;font-size:8.80px;line-height:8.80px;color:#f2f2f2;font-weight:bold;-webkit-text-stroke:0.2px #f2f2f2;letter-spacing:-0.113px;">shutterstock_1839898672.jpg @ 16,7% (Layer 0, Layer Mask/8) *</span>
<svg style="left:305px;top:54px" width="7" height="7" viewBox="0 0 7 7"><path d="M0.8 0.8 L6.2 6.2 M6.2 0.8 L0.8 6.2" stroke="#bdbdbd" stroke-width="1" fill="none"/></svg>
<div class="b" style="left:4px;top:4px;width:12px;height:11px;background:#0a1e36;border-radius:2px;"></div>
<span class="t" style="left:5.80px;top:5.89px;font-size:7.00px;line-height:7.00px;color:#31a8ff;font-weight:bold;-webkit-text-stroke:0.2px #31a8ff;letter-spacing:-0.181px;">Ps</span>
<span class="t" style="left:27.50px;top:4.81px;font-size:9.60px;line-height:9.60px;color:#f4f4f4;-webkit-text-stroke:0.22px #f4f4f4;letter-spacing:-0.367px;">File</span>
<span class="t" style="left:50.80px;top:4.81px;font-size:9.60px;line-height:9.60px;color:#f4f4f4;-webkit-text-stroke:0.22px #f4f4f4;letter-spacing:-0.336px;">Edit</span>
<span class="t" style="left:76.00px;top:4.81px;font-size:9.60px;line-height:9.60px;color:#f4f4f4;-webkit-text-stroke:0.22px #f4f4f4;letter-spacing:-0.276px;">Image</span>
<span class="t" style="left:111.00px;top:4.81px;font-size:9.60px;line-height:9.60px;color:#f4f4f4;-webkit-text-stroke:0.22px #f4f4f4;letter-spacing:-0.503px;">Layer</span>
<span class="t" style="left:142.00px;top:4.81px;font-size:9.60px;line-height:9.60px;color:#f4f4f4;-webkit-text-stroke:0.22px #f4f4f4;letter-spacing:-0.453px;">Type</span>
<span class="t" style="left:171.00px;top:4.81px;font-size:9.60px;line-height:9.60px;color:#f4f4f4;-webkit-text-stroke:0.22px #f4f4f4;letter-spacing:-0.280px;">Select</span>
<span class="t" style="left:205.00px;top:4.81px;font-size:9.60px;line-height:9.60px;color:#f4f4f4;-webkit-text-stroke:0.22px #f4f4f4;letter-spacing:-0.222px;">Filter</span>
<span class="t" style="left:234.70px;top:4.81px;font-size:9.60px;line-height:9.60px;color:#f4f4f4;-webkit-text-stroke:0.22px #f4f4f4;letter-spacing:-0.886px;">3D</span>
<span class="t" style="left:255.30px;top:4.81px;font-size:9.60px;line-height:9.60px;color:#f4f4f4;-webkit-text-stroke:0.22px #f4f4f4;letter-spacing:-0.309px;">View</span>
<span class="t" style="left:284.80px;top:4.81px;font-size:9.60px;line-height:9.60px;color:#f4f4f4;-webkit-text-stroke:0.22px #f4f4f4;letter-spacing:-0.327px;">Plugins</span>
<span class="t" style="left:323.50px;top:4.81px;font-size:9.60px;line-height:9.60px;color:#f4f4f4;-webkit-text-stroke:0.22px #f4f4f4;letter-spacing:-0.107px;">Window</span>
<span class="t" style="left:367.50px;top:4.81px;font-size:9.60px;line-height:9.60px;color:#f4f4f4;-webkit-text-stroke:0.22px #f4f4f4;letter-spacing:-0.311px;">Help</span>
<div class="b" style="left:1424px;top:9.5px;width:8px;height:2px;background:#d8d8d8;"></div>
<svg style="left:1445px;top:4px" width="11" height="9" viewBox="0 0 11 9"><path d="M3.5 2.5 V0.8 H9.7 V5.6 H7.5" fill="none" stroke="#d8d8d8" stroke-width="1.3"/><rect x="0.9" y="3.2" width="6" height="4.8" fill="none" stroke="#d8d8d8" stroke-width="1.5"/></svg>
<svg style="left:1474px;top:3.5px" width="10" height="9" viewBox="0 0 10 9"><path d="M1 0.8 L9 8 M9 0.8 L1 8" stroke="#d8d8d8" stroke-width="1.5" fill="none"/></svg>
<div class="b" style="left:41px;top:25px;width:1px;height:16px;background:#474747;"></div>
<div class="b" style="left:77px;top:25px;width:1px;height:16px;background:#474747;"></div>
<div class="b" style="left:200px;top:25px;width:1px;height:16px;background:#474747;"></div>
<div class="b" style="left:319.5px;top:25px;width:1px;height:16px;background:#474747;"></div>
<div class="b" style="left:420.5px;top:25px;width:1px;height:16px;background:#474747;"></div>
<div class="b" style="left:520.5px;top:25px;width:1px;height:16px;background:#474747;"></div>
<div class="b" style="left:555px;top:25px;width:1px;height:16px;background:#474747;"></div>
<svg style="left:15px;top:26.5px" width="14" height="13" viewBox="0 0 14 13"><path d="M7 0.6 L0.4 6.4 H2.2 V12.4 H5.6 V8.4 H8.4 V12.4 H11.8 V6.4 H13.6 Z" fill="#f0f0f0"/></svg>
<svg style="left:47.5px;top:26.5px" width="13" height="13" viewBox="0 0 13 13"><path d="M6.5 0 L8.8 2.8 H7.2 V5.8 H10.2 V4.2 L13 6.5 L10.2 8.8 V7.2 H7.2 V10.2 H8.8 L6.5 13 L4.2 10.2 H5.8 V7.2 H2.8 V8.8 L0 6.5 L2.8 4.2 V5.8 H5.8 V2.8 H4.2 Z" fill="#e6e6e6"/></svg>
<svg style="left:67px;top:31px" width="7" height="5" viewBox="0 0 7 5"><path d="M0.7 0.8 L3.5 3.8 L6.3 0.8" fill="none" stroke="#a8a8a8" stroke-width="1.1"/></svg>
<div class="b" style="left:86px;top:28.3px;width:8.6px;height:8.6px;background:#efefef;border-radius:2px;"></div>
<svg style="left:86px;top:28.3px" width="8.6" height="8.6" viewBox="0 0 8.6 8.6"><path d="M1.8 4.4 L3.7 6.2 L6.9 2.3" fill="none" stroke="#333" stroke-width="1.5"/></svg>
<span class="t" style="left:97.30px;top:28.84px;font-size:8.60px;line-height:8.60px;color:#e8e8e8;-webkit-text-stroke:0.22px #e8e8e8;letter-spacing:-0.454px;">Auto-Select:</span>
<div class="b" style="left:152px;top:26px;width:40.5px;height:15px;background:#454545;border:1px solid #606060;border-radius:2px;"></div>
<span class="t" style="left:157.50px;top:28.90px;font-size:8.30px;line-height:8.30px;color:#f0f0f0;-webkit-text-stroke:0.22px #f0f0f0;letter-spacing:-0.453px;">Layer</span>
<svg style="left:184px;top:31.5px" width="7" height="5" viewBox="0 0 7 5"><path d="M0.7 0.8 L3.5 3.8 L6.3 0.8" fill="none" stroke="#bdbdbd" stroke-width="1.1"/></svg>
<div class="b" style="left:207.3px;top:29px;width:7.6px;height:7.6px;background:#4a4a4a;border:1px solid #8a8a8a;border-radius:1.5px;"></div>
<span class="t" style="left:218.70px;top:28.84px;font-size:8.60px;line-height:8.60px;color:#e8e8e8;-webkit-text-stroke:0.22px #e8e8e8;letter-spacing:-0.423px;">Show Transform Controls</span>
<svg style="left:530px;top:30.5px" width="15" height="4" viewBox="0 0 15 4"><circle cx="2" cy="2" r="1.55" fill="#f0f0f0"/><circle cx="7.3" cy="2" r="1.55" fill="#f0f0f0"/><circle cx="12.6" cy="2" r="1.55" fill="#f0f0f0"/></svg>
<span class="t" style="left:562.00px;top:28.40px;font-size:8.30px;line-height:8.30px;color:#767676;-webkit-text-stroke:0.22px #767676;letter-spacing:-0.498px;">3D Mode:</span>
<div class="b" style="left:345px;top:210px;width:211px;height:447px;background:#2e2e2e;"></div>
<div class="b" style="left:346px;top:211px;width:209px;height:445px;background:#535353;"></div>
<div class="b" style="left:346px;top:211px;width:209px;height:11px;background:#424242;"></div>
<div class="b" style="left:346px;top:222px;width:209px;height:20.5px;background:#424242;"></div>
<div class="b" style="left:346px;top:222px;width:52px;height:21px;background:#535353;"></div>
<span class="t" style="left:353.00px;top:227.54px;font-size:8.60px;line-height:8.60px;color:#f4f4f4;font-weight:bold;-webkit-text-stroke:0.2px #f4f4f4;letter-spacing:-0.434px;">Properties</span>
<svg style="left:530px;top:214px" width="7" height="6" viewBox="0 0 7 6"><path d="M3 0.3 L0.6 3 L3 5.7 Z M6.4 0.3 L4 3 L6.4 5.7 Z" fill="#d8d8d8"/></svg>
<svg style="left:544.5px;top:213.5px" width="7" height="7" viewBox="0 0 7 7"><path d="M1 1 L6 6 M6 1 L1 6" stroke="#d8d8d8" stroke-width="1.4" fill="none"/></svg>
<svg style="left:542px;top:229px" width="8" height="7" viewBox="0 0 8 7"><path d="M0 0.7 H8 M0 2.6 H8 M0 4.5 H8 M0 6.4 H8" stroke="#c4c4c4" stroke-width="0.9"/></svg>
<div class="b" style="left:355px;top:248.5px;width:16px;height:16px;background:#3a3a3a;border-radius:1px;"></div>
<svg style="left:357.5px;top:251.5px" width="11" height="10" viewBox="0 0 11 10"><rect x="0.6" y="0.6" width="9.8" height="8.8" fill="none" stroke="#f0f0f0" stroke-width="1.2"/><path d="M1.5 8.3 L4 4.6 L6 7 L7.3 5.8 L9.5 8.3 Z" fill="#f0f0f0"/><circle cx="7.8" cy="3" r="1" fill="#f0f0f0"/></svg>
<svg style="left:375.5px;top:251px" width="14" height="11.5" viewBox="0 0 14 11.5"><rect width="14" height="11.5" rx="1" fill="#ececec"/><circle cx="7" cy="5.75" r="3.6" fill="#3a3a3a"/></svg>
<span class="t" style="left:395.30px;top:254.50px;font-size:8.30px;line-height:8.30px;color:#e0e0e0;-webkit-text-stroke:0.22px #e0e0e0;letter-spacing:-0.460px;">Pixel Layer</span>
<div class="b" style="left:346px;top:268px;width:209px;height:1px;background:#444444;"></div>
<div class="b" style="left:542px;top:269px;width:12px;height:360px;background:#595959;"></div>
<div class="b" style="left:541px;top:269px;width:1px;height:360px;background:#4a4a4a;"></div>
<svg style="left:351px;top:278.5px" width="8" height="5" viewBox="0 0 8 5"><path d="M0.6 0.6 L4 4 L7.4 0.6" fill="none" stroke="#bdbdbd" stroke-width="1"/></svg>
<span class="t" style="left:364.50px;top:277.54px;font-size:8.60px;line-height:8.60px;color:#f4f4f4;font-weight:bold;-webkit-text-stroke:0.2px #f4f4f4;letter-spacing:-0.373px;">Transform</span>
<span class="t" style="left:380.50px;top:297.20px;font-size:8.30px;line-height:8.30px;color:#d0d0d0;-webkit-text-stroke:0.22px #d0d0d0;letter-spacing:-1.034px;">W</span>
<div class="b" style="left:393px;top:294.5px;width:40px;height:11px;background:#454545;border:1px solid #636363;border-radius:1.5px;"></div>
<span class="t" style="left:396.00px;top:297.25px;font-size:8.20px;line-height:8.20px;color:#f0f0f0;-webkit-text-stroke:0.22px #f0f0f0;letter-spacing:-0.312px;">5477 px</span>
<span class="t" style="left:447.30px;top:297.20px;font-size:8.30px;line-height:8.30px;color:#d0d0d0;-webkit-text-stroke:0.22px #d0d0d0;letter-spacing:-0.036px;">X</span>
<div class="b" style="left:457.3px;top:294.5px;width:40px;height:11px;background:#454545;border:1px solid #636363;border-radius:1.5px;"></div>
<span class="t" style="left:460.80px;top:297.25px;font-size:8.20px;line-height:8.20px;color:#f0f0f0;-webkit-text-stroke:0.22px #f0f0f0;">0 px</span>
<span class="t" style="left:382.00px;top:317.00px;font-size:8.30px;line-height:8.30px;color:#d0d0d0;-webkit-text-stroke:0.22px #d0d0d0;letter-spacing:-0.494px;">H</span>
<div class="b" style="left:393px;top:314.5px;width:40px;height:11px;background:#454545;border:1px solid #636363;border-radius:1.5px;"></div>
<span class="t" style="left:396.00px;top:317.05px;font-size:8.20px;line-height:8.20px;color:#f0f0f0;-webkit-text-stroke:0.22px #f0f0f0;letter-spacing:-0.312px;">3651 px</span>
<span class="t" style="left:447.30px;top:317.00px;font-size:8.30px;line-height:8.30px;color:#d0d0d0;-webkit-text-stroke:0.22px #d0d0d0;letter-spacing:-0.036px;">Y</span>
<div class="b" style="left:457.3px;top:314.5px;width:40px;height:11px;background:#454545;border:1px solid #636363;border-radius:1.5px;"></div>
<span class="t" style="left:460.80px;top:317.05px;font-size:8.20px;line-height:8.20px;color:#f0f0f0;-webkit-text-stroke:0.22px #f0f0f0;">0 px</span>
<svg style="left:359.5px;top:303.5px" width="7" height="13" viewBox="0 0 7 13"><rect x="1" y="0.8" width="5" height="5" rx="2.2" fill="none" stroke="#e6e6e6" stroke-width="1.3"/><rect x="1" y="7.2" width="5" height="5" rx="2.2" fill="none" stroke="#e6e6e6" stroke-width="1.3"/><path d="M3.5 3.6 V9.4" stroke="#e6e6e6" stroke-width="1.3"/></svg>
<svg style="left:378px;top:338px" width="11" height="9" viewBox="0 0 11 9"><path d="M9 0.8 L0.8 8 H10.4" fill="none" stroke="#d8d8d8" stroke-width="1.1"/><path d="M5.2 8 A4.5 4.5 0 0 0 4 4.9" fill="none" stroke="#d8d8d8" stroke-width="0.9"/></svg>
<div class="b" style="left:393px;top:337px;width:30px;height:11px;background:#454545;border:1px solid #636363;border-radius:1.5px;"></div>
<span class="t" style="left:396.00px;top:339.55px;font-size:8.20px;line-height:8.20px;color:#f0f0f0;-webkit-text-stroke:0.22px #f0f0f0;letter-spacing:-0.148px;">0,00°</span>
<div class="b" style="left:423px;top:337px;width:10px;height:11px;background:#454545;border:1px solid #636363;border-radius:1.5px;"></div>
<svg style="left:425px;top:340.5px" width="6" height="4" viewBox="0 0 6 4"><path d="M0.5 0.5 L3 3.2 L5.5 0.5" fill="none" stroke="#c8c8c8" stroke-width="1"/></svg>
<svg style="left:460px;top:337px" width="14" height="11" viewBox="0 0 14 11"><path d="M0.7 1.5 V9.5 L4.6 5.5 Z" fill="none" stroke="#e0e0e0" stroke-width="1.1"/><path d="M13.3 1.5 V9.5 L9.4 5.5 Z" fill="#e0e0e0" stroke="#e0e0e0" stroke-width="1.1"/><path d="M7 0 V11" stroke="#e0e0e0" stroke-width="1.1"/></svg>
<svg style="left:483.5px;top:335.5px" width="11" height="14" viewBox="0 0 11 14"><path d="M1.5 0.7 H9.5 L5.5 4.6 Z" fill="none" stroke="#e0e0e0" stroke-width="1.1"/><path d="M1.5 13.3 H9.5 L5.5 9.4 Z" fill="#e0e0e0" stroke="#e0e0e0" stroke-width="1.1"/><path d="M0 7 H11" stroke="#e0e0e0" stroke-width="1.1"/></svg>
<div class="b" style="left:346px;top:360px;width:195px;height:1px;background:#464646;"></div>
<svg style="left:351px;top:369.5px" width="8" height="5" viewBox="0 0 8 5"><path d="M0.6 0.6 L4 4 L7.4 0.6" fill="none" stroke="#bdbdbd" stroke-width="1"/></svg>
<span class="t" style="left:365.40px;top:368.54px;font-size:8.60px;line-height:8.60px;color:#f4f4f4;font-weight:bold;-webkit-text-stroke:0.2px #f4f4f4;letter-spacing:-0.245px;">Align and Distribute</span>
<span class="t" style="left:353.20px;top:386.55px;font-size:8.20px;line-height:8.20px;color:#c8c8c8;-webkit-text-stroke:0.22px #c8c8c8;letter-spacing:-0.202px;">Align:</span>
<span class="t" style="left:484.70px;top:429.83px;font-size:9.00px;line-height:9.00px;color:#e8e8e8;-webkit-text-stroke:0.22px #e8e8e8;letter-spacing:0.449px;">•••</span>
<div class="b" style="left:346px;top:444.5px;width:195px;height:1px;background:#464646;"></div>
<svg style="left:351px;top:455px" width="8" height="5" viewBox="0 0 8 5"><path d="M0.6 0.6 L4 4 L7.4 0.6" fill="none" stroke="#bdbdbd" stroke-width="1"/></svg>
<span class="t" style="left:364.90px;top:454.14px;font-size:8.60px;line-height:8.60px;color:#f4f4f4;font-weight:bold;-webkit-text-stroke:0.2px #f4f4f4;letter-spacing:-0.400px;">Quick Actions</span>
<div class="b" style="left:353px;top:472px;width:145px;height:16.5px;background:#444444;border:1px solid #5e5e5e;border-radius:2px;"></div>
<span class="t" style="left:389.50px;top:476.90px;font-size:8.30px;line-height:8.30px;color:#f0f0f0;-webkit-text-stroke:0.22px #f0f0f0;letter-spacing:-0.383px;">Remove Background</span>
<div class="b" style="left:353px;top:494.8px;width:145px;height:16.3px;background:#444444;border:1px solid #5e5e5e;border-radius:2px;"></div>
<span class="t" style="left:400.90px;top:499.70px;font-size:8.30px;line-height:8.30px;color:#f0f0f0;-webkit-text-stroke:0.22px #f0f0f0;letter-spacing:-0.219px;">Select Subject</span>
<span class="t" style="left:407.70px;top:521.36px;font-size:8.00px;line-height:8.00px;color:#e8e8e8;-webkit-text-stroke:0.22px #e8e8e8;letter-spacing:-0.216px;text-decoration:underline;">View More</span>
<div class="b" style="left:346px;top:649.5px;width:209px;height:1px;background:#444;"></div>
<div class="b" style="left:1281px;top:46px;width:219px;height:775px;background:#424242;"></div>
<div class="b" style="left:1281px;top:56px;width:2px;height:765px;background:#4a4a4a;"></div>
<div class="b" style="left:1283px;top:56px;width:27px;height:765px;background:#535353;"></div>
<div class="b" style="left:1310px;top:56px;width:2px;height:765px;background:#3a3a3a;"></div>
<div class="b" style="left:1312px;top:56px;width:188px;height:765px;background:#535353;"></div>
<svg style="left:1299.5px;top:48px" width="7" height="6" viewBox="0 0 7 6"><path d="M3 0.3 L0.6 3 L3 5.7 Z M6.4 0.3 L4 3 L6.4 5.7 Z" fill="#d8d8d8"/></svg>
<svg style="left:1488.5px;top:48px" width="7" height="6" viewBox="0 0 7 6"><path d="M0.6 0.3 L3 3 L0.6 5.7 Z M4 0.3 L6.4 3 L4 5.7 Z" fill="#d8d8d8"/></svg>
<div class="b" style="left:1283px;top:109px;width:27px;height:1px;background:#3e3e3e;"></div>
<div class="b" style="left:1283px;top:140.5px;width:27px;height:1px;background:#3e3e3e;"></div>
<div class="b" style="left:1283px;top:195px;width:27px;height:1px;background:#3e3e3e;"></div>
<div class="b" style="left:1283px;top:226.5px;width:27px;height:1px;background:#3e3e3e;"></div>
<div class="b" style="left:1289px;top:59px;width:15px;height:2px;background:#4b4b4b;"></div>
<div class="b" style="left:1289px;top:112px;width:15px;height:2px;background:#4b4b4b;"></div>
<div class="b" style="left:1289px;top:143px;width:15px;height:2px;background:#4b4b4b;"></div>
<div class="b" style="left:1289px;top:198px;width:15px;height:2px;background:#4b4b4b;"></div>
<div class="b" style="left:1312px;top:56px;width:188px;height:21.5px;background:#424242;"></div>
<div class="b" style="left:1366px;top:56px;width:49.5px;height:22px;background:#535353;"></div>
<span class="t" style="left:1319.50px;top:61.99px;font-size:8.50px;line-height:8.50px;color:#a0a0a0;font-weight:bold;-webkit-text-stroke:0.2px #a0a0a0;letter-spacing:-0.404px;">Histogram</span>
<span class="t" style="left:1373.00px;top:61.99px;font-size:8.50px;line-height:8.50px;color:#f4f4f4;font-weight:bold;-webkit-text-stroke:0.2px #f4f4f4;letter-spacing:-0.301px;">Navigator</span>
<svg style="left:1487.5px;top:62.5px" width="8" height="7" viewBox="0 0 8 7"><path d="M0 0.7 H8 M0 2.6 H8 M0 4.5 H8 M0 6.4 H8" stroke="#c4c4c4" stroke-width="0.9"/></svg>
<div class="b" style="left:1317px;top:124px;width:177.3px;height:119px;background:#e03c3c;"></div>
<div class="b" style="left:1318.5px;top:125.5px;width:174.3px;height:116px;background:#fff;background:repeating-conic-gradient(#d2d2d2 0% 25%,#ffffff 0% 50%) 0 0/6.2px 6.2px;"></div>
<svg style="left:1318.5px;top:125.5px" width="174.3" height="116" viewBox="293 200 714 476"><g style="filter:blur(0.5px)"><use href="#photo"/></g></svg>
<div class="b" style="left:1312px;top:289px;width:188px;height:1px;background:#444;"></div>
<div class="b" style="left:1312px;top:290px;width:44px;height:20px;background:#4a4a4a;"></div>
<span class="t" style="left:1317.00px;top:296.65px;font-size:8.20px;line-height:8.20px;color:#f0f0f0;-webkit-text-stroke:0.22px #f0f0f0;letter-spacing:-0.519px;">16,67%</span>
<svg style="left:1362.5px;top:297px" width="8" height="5" viewBox="0 0 8 5"><path d="M0 5 L2.6 1.6 L4 0.6 L5.4 1.6 L8 5 Z" fill="#e0e0e0"/></svg>
<div class="b" style="left:1381px;top:297px;width:78px;height:1.6px;background:#757575;"></div>
<svg style="left:1406.3px;top:298px" width="8" height="8.5" viewBox="0 0 8 8.5"><path d="M4 0 L7.6 4.6 V8 H0.4 V4.6 Z" fill="#f4f4f4" stroke="#2c2c2c" stroke-width="0.8"/></svg>
<svg style="left:1467px;top:295.5px" width="13" height="7" viewBox="0 0 13 7"><path d="M0 7 L3.4 2.6 L5 3.4 L7.4 0.4 L9.4 2.2 L13 7 Z" fill="#e0e0e0"/></svg>
<div class="b" style="left:1312px;top:310px;width:188px;height:1px;background:#3a3a3a;"></div>
<div class="b" style="left:1312px;top:311px;width:188px;height:21px;background:#424242;"></div>
<div class="b" style="left:1312px;top:311px;width:59.7px;height:21.5px;background:#535353;"></div>
<span class="t" style="left:1319.50px;top:317.30px;font-size:8.50px;line-height:8.50px;color:#f4f4f4;font-weight:bold;-webkit-text-stroke:0.2px #f4f4f4;letter-spacing:-0.480px;">Adjustments</span>
<svg style="left:1487.5px;top:317.8px" width="8" height="7" viewBox="0 0 8 7"><path d="M0 0.7 H8 M0 2.6 H8 M0 4.5 H8 M0 6.4 H8" stroke="#c4c4c4" stroke-width="0.9"/></svg>
<span class="t" style="left:1319.50px;top:338.40px;font-size:8.30px;line-height:8.30px;color:#dcdcdc;-webkit-text-stroke:0.22px #dcdcdc;letter-spacing:-0.160px;">Add an adjustment</span>
<div class="b" style="left:1312px;top:564.5px;width:188px;height:1.5px;background:#3a3a3a;"></div>
<div class="b" style="left:1312px;top:566px;width:188px;height:21.3px;background:#424242;"></div>
<div class="b" style="left:1312px;top:566px;width:37px;height:21.8px;background:#535353;"></div>
<div class="b" style="left:1396px;top:566px;width:1px;height:21.3px;background:#3a3a3a;"></div>
<div class="b" style="left:1430px;top:566px;width:1px;height:21.3px;background:#3a3a3a;"></div>
<span class="t" style="left:1319.40px;top:572.89px;font-size:8.50px;line-height:8.50px;color:#f4f4f4;font-weight:bold;-webkit-text-stroke:0.2px #f4f4f4;letter-spacing:-0.652px;">Layers</span>
<span class="t" style="left:1356.20px;top:572.89px;font-size:8.50px;line-height:8.50px;color:#a8a8a8;font-weight:bold;-webkit-text-stroke:0.2px #a8a8a8;letter-spacing:-0.682px;">Channels</span>
<span class="t" style="left:1403.00px;top:572.89px;font-size:8.50px;line-height:8.50px;color:#a8a8a8;font-weight:bold;-webkit-text-stroke:0.2px #a8a8a8;letter-spacing:-0.590px;">Paths</span>
<svg style="left:1487.5px;top:573.5px" width="8" height="7" viewBox="0 0 8 7"><path d="M0 0.7 H8 M0 2.6 H8 M0 4.5 H8 M0 6.4 H8" stroke="#c4c4c4" stroke-width="0.9"/></svg>
<div class="b" style="left:1316px;top:596.6px;width:67px;height:13px;background:#454545;border:1px solid #5e5e5e;border-radius:1.5px;"></div>
<svg style="left:1320.5px;top:598.5px" width="9" height="9" viewBox="0 0 9 9"><circle cx="3.6" cy="3.6" r="2.7" fill="none" stroke="#e8e8e8" stroke-width="1.3"/><path d="M5.6 5.6 L8.4 8.4" stroke="#e8e8e8" stroke-width="1.5"/></svg>
<span class="t" style="left:1332.60px;top:599.20px;font-size:8.30px;line-height:8.30px;color:#f0f0f0;-webkit-text-stroke:0.22px #f0f0f0;letter-spacing:-0.253px;">Kind</span>
<svg style="left:1374px;top:601px" width="7" height="5" viewBox="0 0 7 5"><path d="M0.7 0.8 L3.5 3.8 L6.3 0.8" fill="none" stroke="#c4c4c4" stroke-width="1.1"/></svg>
<div class="b" style="left:1316px;top:618.4px;width:99.5px;height:13.4px;background:#454545;border:1px solid #5e5e5e;border-radius:1.5px;"></div>
<span class="t" style="left:1321.90px;top:621.20px;font-size:8.30px;line-height:8.30px;color:#f0f0f0;-webkit-text-stroke:0.22px #f0f0f0;letter-spacing:-0.375px;">Normal</span>
<svg style="left:1407px;top:623px" width="7" height="5" viewBox="0 0 7 5"><path d="M0.7 0.8 L3.5 3.8 L6.3 0.8" fill="none" stroke="#c4c4c4" stroke-width="1.1"/></svg>
<span class="t" style="left:1420.70px;top:621.20px;font-size:8.30px;line-height:8.30px;color:#dcdcdc;-webkit-text-stroke:0.22px #dcdcdc;letter-spacing:-0.318px;">Opacity:</span>
<div class="b" style="left:1454px;top:618.4px;width:26px;height:13.4px;background:#454545;border:1px solid #5e5e5e;border-radius:1.5px;"></div>
<span class="t" style="left:1457.00px;top:621.20px;font-size:8.30px;line-height:8.30px;color:#f0f0f0;-webkit-text-stroke:0.22px #f0f0f0;letter-spacing:-0.432px;">100%</span>
<div class="b" style="left:1482.4px;top:618.4px;width:10px;height:13.4px;background:#454545;border:1px solid #5e5e5e;border-radius:1.5px;"></div>
<svg style="left:1484px;top:623px" width="7" height="5" viewBox="0 0 7 5"><path d="M0.7 0.8 L3.5 3.8 L6.3 0.8" fill="none" stroke="#c4c4c4" stroke-width="1.1"/></svg>
<div class="b" style="left:1312px;top:635px;width:188px;height:1px;background:#484848;"></div>
<span class="t" style="left:1317.10px;top:643.20px;font-size:8.30px;line-height:8.30px;color:#dcdcdc;-webkit-text-stroke:0.22px #dcdcdc;letter-spacing:-0.348px;">Lock:</span>
<span class="t" style="left:1438.30px;top:643.20px;font-size:8.30px;line-height:8.30px;color:#dcdcdc;-webkit-text-stroke:0.22px #dcdcdc;letter-spacing:-0.402px;">Fill:</span>
<div class="b" style="left:1454px;top:640.3px;width:26px;height:13.4px;background:#454545;border:1px solid #5e5e5e;border-radius:1.5px;"></div>
<span class="t" style="left:1457.00px;top:643.20px;font-size:8.30px;line-height:8.30px;color:#f0f0f0;-webkit-text-stroke:0.22px #f0f0f0;letter-spacing:-0.432px;">100%</span>
<div class="b" style="left:1482.4px;top:640.3px;width:10px;height:13.4px;background:#454545;border:1px solid #5e5e5e;border-radius:1.5px;"></div>
<svg style="left:1484px;top:645px" width="7" height="5" viewBox="0 0 7 5"><path d="M0.7 0.8 L3.5 3.8 L6.3 0.8" fill="none" stroke="#c4c4c4" stroke-width="1.1"/></svg>
<div class="b" style="left:1312px;top:657px;width:188px;height:1px;background:#484848;"></div>
<div class="b" style="left:1336px;top:659px;width:151px;height:23px;background:#696969;"></div>
<svg style="left:1319px;top:668px" width="12" height="8" viewBox="0 0 12 8"><path d="M0.4 4 Q6 -2.6 11.6 4 Q6 10.6 0.4 4 Z" fill="#f0f0f0"/><circle cx="6" cy="4" r="2.1" fill="#535353"/><circle cx="6" cy="4" r="1" fill="#f0f0f0"/></svg>
<svg style="left:1339.3px;top:663.8px" width="24.6" height="14.6" viewBox="0 0 24.6 14.6"><defs><linearGradient id="lt" x1="0" x2="1"><stop offset="0" stop-color="#070d2c"/><stop offset="0.5" stop-color="#0c1a4a"/><stop offset="1" stop-color="#0a1640"/></linearGradient><filter id="ltb"><feGaussianBlur stdDeviation="0.55"/></filter></defs><rect width="24.6" height="14.6" fill="url(#lt)"/><g filter="url(#ltb)"><path d="M12.6 2 Q14.6 0.4 16.6 1.6 Q18 3.6 17.2 6.4 Q20.4 8 22.6 14.6 H15.4 Q14.8 10.6 13 8 Q11 5 12.6 2 Z" fill="#e4108e"/><path d="M12.4 2.4 Q10.6 5.4 12.8 8.4 L14.6 14.6 H13 Q11.8 9.6 10.8 6.4 Q10.6 3.6 12.4 2.4 Z" fill="#1ab6da"/><path d="M16.8 2 Q19 4.4 18 7 Q21.4 8.6 23.6 14.6 H21.6 Q19.6 9.4 16.8 8.2 Q17.8 5 16.8 2 Z" fill="#58a8e8"/></g></svg>
<svg style="left:1366.8px;top:665.5px" width="6" height="12" viewBox="0 0 6 12"><rect x="0.9" y="0.7" width="4.2" height="4.6" rx="1.8" fill="none" stroke="#e6e6e6" stroke-width="1.2"/><rect x="0.9" y="6.7" width="4.2" height="4.6" rx="1.8" fill="none" stroke="#e6e6e6" stroke-width="1.2"/><path d="M3 3.4 V8.6" stroke="#e6e6e6" stroke-width="1.2"/></svg>
<svg style="left:1375px;top:661px" width="26.6" height="19.6" viewBox="0 0 26.6 19.6"><rect x="1.4" y="2.2" width="24" height="15.6" fill="#000"/><ellipse cx="15.8" cy="7.3" rx="4.3" ry="4.6" fill="#fff"/><path d="M13 9.6 Q14.6 13.6 16.6 17.8 H25.4 V14.6 Q22.6 12.2 19.4 11.2 L17 8 Z" fill="#fff"/><path d="M0.6 5.5 V0.6 H7 M19.6 0.6 H26 V5.5 M26 14.1 V19 H19.6 M7 19 H0.6 V14.1" fill="none" stroke="#f4f4f4" stroke-width="1.2"/></svg>
<span class="t" style="left:1408.30px;top:667.80px;font-size:8.30px;line-height:8.30px;color:#f4f4f4;-webkit-text-stroke:0.22px #f4f4f4;letter-spacing:-0.484px;">Layer 0</span>
<div class="b" style="left:1312px;top:800px;width:188px;height:1px;background:#444;"></div>
<div class="b" style="left:1497px;top:46px;width:3px;height:775px;background:#4b4b4b;"></div>
<div class="b" style="left:4px;top:69.5px;width:23px;height:18.5px;background:#3a3a3a;border-radius:1px;"></div>
<svg style="left:0;top:56px" width="32" height="560" viewBox="0 56 32 560" fill="none" stroke="none"><g transform="translate(9.2,72.6) scale(0.94)"><path d="M6.5 0 L8.8 2.8 H7.2 V5.8 H10.2 V4.2 L13 6.5 L10.2 8.8 V7.2 H7.2 V10.2 H8.8 L6.5 13 L4.2 10.2 H5.8 V7.2 H2.8 V8.8 L0 6.5 L2.8 4.2 V5.8 H5.8 V2.8 H4.2 Z" fill="#e6e6e6"/></g><path d="M24.5 82.6 L24.5 85.4 L21.7 85.4 Z" fill="#bdbdbd"/><rect x="9.2" y="93.4" width="12.6" height="10.4" stroke="#e6e6e6" stroke-width="1.3" stroke-dasharray="3 1.6"/><path d="M24.5 102.2 L24.5 105 L21.7 105 Z" fill="#bdbdbd"/><ellipse cx="16.8" cy="116.8" rx="5.8" ry="4.2" stroke="#e6e6e6" stroke-width="1.4" transform="rotate(-14 16.8 116.8)"/><path d="M12.2 119.6 Q10.6 120.6 11.6 122.2 Q13.2 123 12.6 125.8" stroke="#e6e6e6" stroke-width="1.3"/><path d="M24.5 122.8 L24.5 125.6 L21.7 125.6 Z" fill="#bdbdbd"/><path d="M14.4 135.2 A4.8 4.8 0 1 0 13.6 144.4" stroke="#e6e6e6" stroke-width="1.3" stroke-dasharray="2 1.3"/><path d="M22.6 134 L17.2 140.4 L15.8 143.4 Q15.2 144.8 16.8 144.2 L19.2 142.4 Z" fill="#e6e6e6"/><path d="M24.5 143.2 L24.5 146 L21.7 146 Z" fill="#bdbdbd"/><path d="M11.4 152.6 V162 H23 M8.4 155.6 H20 V165" stroke="#e6e6e6" stroke-width="1.5"/><path d="M24.5 162.6 L24.5 165.4 L21.7 165.4 Z" fill="#bdbdbd"/><rect x="9.8" y="174.4" width="12.8" height="10.8" stroke="#e6e6e6" stroke-width="1.3"/><path d="M9.8 174.4 L22.6 185.2 M22.6 174.4 L9.8 185.2" stroke="#e6e6e6" stroke-width="1.1"/><path d="M9.4 206.4 L10 203.8 L16.4 197.4 L18.6 199.6 L12.2 206 Z" stroke="#e6e6e6" stroke-width="1.2"/><path d="M16 196 L20 200 M17.6 197.6 L20.4 194.8 Q21.8 194 22.2 195.6 Q22.4 196.6 20.6 198.4" stroke="#e6e6e6" stroke-width="2" stroke-linecap="round"/><path d="M24.5 204 L24.5 206.8 L21.7 206.8 Z" fill="#bdbdbd"/><g transform="rotate(-40 15.8 220)"><rect x="7.6" y="216.8" width="16.4" height="6.6" rx="1.6" fill="#e6e6e6"/><rect x="12.9" y="217.6" width="5.8" height="5" fill="#535353"/><path d="M14 219 H15.2 M16.4 219 H17.6 M14 221.2 H15.2 M16.4 221.2 H17.6" stroke="#e6e6e6" stroke-width="1"/></g><path d="M9.4 218.2 A4 4 0 0 1 14 212.8" stroke="#e6e6e6" stroke-width="1" stroke-dasharray="1.4 1.2"/><path d="M24.5 224.2 L24.5 227 L21.7 227 Z" fill="#bdbdbd"/><path d="M20 234.6 Q21.8 235 21.2 236.8 L16.2 244.4 L13.4 242.6 Z" fill="#e6e6e6"/><path d="M12.8 243.4 L15.6 245.2 Q14.6 248 9.8 248.4 Q11.6 246.2 12.8 243.4 Z" fill="#e6e6e6"/><path d="M24.5 245 L24.5 247.8 L21.7 247.8 Z" fill="#bdbdbd"/><path d="M15.8 255 Q18.6 255 18.6 257.6 Q18.6 259 17.6 260 L17.6 262.2 H21 V264.8 H10.6 V262.2 H14 V260 Q13 259 13 257.6 Q13 255 15.8 255 Z" fill="#e6e6e6"/><path d="M10.6 266.6 H21" stroke="#e6e6e6" stroke-width="1.2"/><path d="M24.5 264.6 L24.5 267.4 L21.7 267.4 Z" fill="#bdbdbd"/><path d="M21.6 275.6 Q22.6 276 22 277.2 L16.2 285.2 L14.4 284 Z" fill="#e6e6e6"/><path d="M13.8 284.8 L15.6 286 Q15 288.4 11 289 Q12.6 287.2 13.8 284.8 Z" fill="#e6e6e6"/><path d="M9 280.4 Q10.4 277 14.4 277.4 M9 277.2 V280.6 H12.2" stroke="#e6e6e6" stroke-width="1.3"/><path d="M19 284 Q21 284.6 21.4 287" stroke="#e6e6e6" stroke-width="1"/><path d="M24.5 286 L24.5 288.8 L21.7 288.8 Z" fill="#bdbdbd"/><path d="M16.6 296.6 L22 298.8 L18.6 304.4 L13.2 302.2 Z" fill="#e6e6e6"/><path d="M13.2 302.2 L18.6 304.4 L17 307 L11.6 307 L10.6 305.8 Z" stroke="#e6e6e6" stroke-width="1.1"/><path d="M11.6 307.6 H22" stroke="#e6e6e6" stroke-width="1.1"/><path d="M24.5 306.6 L24.5 309.4 L21.7 309.4 Z" fill="#bdbdbd"/><path d="M13.8 317.2 L20 323.4 L15 328.4 L9 322.2 Z" stroke="#e6e6e6" stroke-width="1.3"/><path d="M13.2 315.4 Q15.2 315.4 15.4 320" stroke="#e6e6e6" stroke-width="1.1"/><path d="M21.6 323.6 Q23.4 326.2 23 327.4 Q22.2 328.8 20.8 327.6 Q20.4 326 21.6 323.6 Z" fill="#e6e6e6"/><path d="M24.5 326.2 L24.5 329 L21.7 329 Z" fill="#bdbdbd"/><path d="M15.8 336.2 Q20.6 342.2 20.4 345 Q20 348.8 15.8 348.8 Q11.6 348.8 11.2 345 Q11 342.2 15.8 336.2 Z" fill="#e6e6e6"/><path d="M24.5 346.6 L24.5 349.4 L21.7 349.4 Z" fill="#bdbdbd"/><circle cx="17.8" cy="360.6" r="4.3" fill="#e6e6e6"/><path d="M14.6 364 L9.4 369.4" stroke="#e6e6e6" stroke-width="1.8" stroke-linecap="round"/><path d="M24.5 367 L24.5 369.8 L21.7 369.8 Z" fill="#bdbdbd"/><g transform="rotate(40 16 384)"><path d="M16 376.4 L19.4 382 L18.4 388.6 H13.6 L12.6 382 Z" stroke="#e6e6e6" stroke-width="1.3"/><path d="M16 377 V383.4" stroke="#e6e6e6" stroke-width="1"/><circle cx="16" cy="384.2" r="1.1" fill="#e6e6e6"/><path d="M13.2 390.4 H18.8" stroke="#e6e6e6" stroke-width="1.5"/></g><path d="M24.5 387.8 L24.5 390.6 L21.7 390.6 Z" fill="#bdbdbd"/><path d="M10.6 398.2 H21 V401 H19.8 Q19.6 399.8 18.6 399.8 H16.8 V407.6 Q16.8 408.4 18.4 408.4 V409.6 H13.2 V408.4 Q14.8 408.4 14.8 407.6 V399.8 H13 Q12 399.8 11.8 401 H10.6 Z" fill="#e6e6e6"/><path d="M24.5 407.4 L24.5 410.2 L21.7 410.2 Z" fill="#bdbdbd"/><path d="M12.4 417.6 L12.4 429.2 L15.2 426.6 L17.2 431 L19 430.2 L17 425.8 L20.6 425.6 Z" fill="#1e1e1e" stroke="#e6e6e6" stroke-width="1.1" stroke-linejoin="round"/><path d="M24.5 428 L24.5 430.8 L21.7 430.8 Z" fill="#bdbdbd"/><rect x="9.2" y="438.6" width="13" height="10.4" fill="#6e6e6e" stroke="#e6e6e6" stroke-width="1.2"/><path d="M24.5 447.6 L24.5 450.4 L21.7 450.4 Z" fill="#bdbdbd"/><path d="M12.6 470.4 Q10.4 467.2 9.6 465 Q9.6 463.8 10.8 464.4 L12.4 466.2 V459.6 Q12.4 458.6 13.3 458.6 Q14.2 458.6 14.2 459.6 V458.2 Q14.2 457.2 15.2 457.2 Q16.2 457.2 16.2 458.2 V458.8 Q16.2 457.8 17.2 457.8 Q18.2 457.8 18.2 458.8 V460.2 Q18.2 459.4 19.1 459.4 Q20 459.4 20 460.4 V466.4 Q20 468.6 18.8 470.4 Z" fill="#e6e6e6"/><path d="M24.5 467.8 L24.5 470.6 L21.7 470.6 Z" fill="#bdbdbd"/><circle cx="14.6" cy="482.4" r="4.6" stroke="#e6e6e6" stroke-width="1.4"/><path d="M18 486 L21.8 490" stroke="#e6e6e6" stroke-width="1.8" stroke-linecap="round"/><circle cx="10.8" cy="505.2" r="1.45" fill="#e6e6e6"/><circle cx="15.6" cy="505.2" r="1.45" fill="#e6e6e6"/><circle cx="20.4" cy="505.2" r="1.45" fill="#e6e6e6"/><path d="M24.5 508.8 L24.5 511.6 L21.7 511.6 Z" fill="#bdbdbd"/><rect x="7" y="522.8" width="5" height="5" fill="#535353" stroke="#e6e6e6" stroke-width="1"/><rect x="4.4" y="520.4" width="5" height="5" fill="#e6e6e6"/><path d="M18.6 521.6 H23 V526.6" stroke="#e6e6e6" stroke-width="1.2"/><path d="M17.4 521.6 L19.8 519.6 V523.6 Z M23 528 L21 525.6 H25 Z" fill="#e6e6e6"/><rect x="11.4" y="540.6" width="14.2" height="13.2" fill="#000" stroke="#d8d8d8" stroke-width="1"/><rect x="10.6" y="539.8" width="1.4" height="7" fill="#535353"/><rect x="3.8" y="532.4" width="14.2" height="13.8" fill="#fff" stroke="#535353" stroke-width="0.8"/><rect x="8.8" y="564.4" width="12.8" height="9" stroke="#e6e6e6" stroke-width="1.2"/><circle cx="15.2" cy="568.9" r="2.6" stroke="#e6e6e6" stroke-width="1" stroke-dasharray="1.2 0.9"/><rect x="11.6" y="584.6" width="10" height="6.6" stroke="#e6e6e6" stroke-width="1.2"/><path d="M11.6 587.4 H8.8 V594 H18.8 V591.2" stroke="#e6e6e6" stroke-width="1.2"/><path d="M24.5 592.2 L24.5 595 L21.7 595 Z" fill="#bdbdbd"/></svg>
<svg style="left:320px;top:22px" width="400" height="22" viewBox="320 22 400 22" fill="none"><rect x="331.2" y="26.7" width="1.1" height="12" fill="#a6a6a6"/><rect x="333.2" y="29.5" width="5.3" height="2.5" fill="#a6a6a6"/><rect x="333.2" y="34" width="8.1" height="3" fill="#a6a6a6"/><rect x="355.8" y="26.7" width="1.1" height="12" fill="#a6a6a6"/><rect x="353.3" y="29.5" width="6.1" height="2.5" fill="#a6a6a6"/><rect x="351.9" y="34" width="8.9" height="3" fill="#a6a6a6"/><rect x="381" y="26.7" width="1.1" height="12" fill="#a6a6a6"/><rect x="374.7" y="29.5" width="5.4" height="2.5" fill="#a6a6a6"/><rect x="371.7" y="34" width="8.4" height="3" fill="#a6a6a6"/><rect x="396" y="28.5" width="12.7" height="1" fill="#a6a6a6"/><rect x="396" y="36" width="12.7" height="1" fill="#a6a6a6"/><rect x="398.7" y="31.4" width="8.8" height="2.9" fill="#a6a6a6"/><rect x="431.5" y="27.8" width="11.3" height="1.1" fill="#a6a6a6"/><rect x="433" y="30" width="3.2" height="8.5" fill="#a6a6a6"/><rect x="437.6" y="30" width="3.3" height="6" fill="#a6a6a6"/><rect x="450.7" y="33" width="12.3" height="1" fill="#a6a6a6"/><rect x="453.4" y="28.8" width="3.2" height="9.6" fill="#a6a6a6"/><rect x="458.1" y="31" width="3.3" height="5.2" fill="#a6a6a6"/><rect x="472" y="36.9" width="11.6" height="1.1" fill="#a6a6a6"/><rect x="474" y="27.5" width="3.2" height="8.5" fill="#a6a6a6"/><rect x="478.7" y="30.5" width="3.3" height="5.5" fill="#a6a6a6"/><rect x="500.2" y="27" width="1.1" height="12" fill="#a6a6a6"/><rect x="507.2" y="27" width="1.1" height="12" fill="#a6a6a6"/><rect x="502.6" y="29" width="3.4" height="8" fill="#a6a6a6"/><g stroke="#787878" stroke-width="1.2"><ellipse cx="614" cy="31" rx="5.6" ry="3.2" transform="rotate(-25 614 31)"/><ellipse cx="617.4" cy="34.2" rx="5.6" ry="3" transform="rotate(20 617.4 34.2)"/></g><g stroke="#787878" stroke-width="1.2"><path d="M631.4 28 A6.3 6.3 0 1 1 630 34.6"/><circle cx="636" cy="32.8" r="2.9"/></g><path d="M629.6 27 L633.4 27.2 L631.6 30.4 Z" fill="#787878"/><g stroke="#787878" stroke-width="1.1"><path d="M655.4 26.6 L657.6 29.4 L655.4 32.2 L653.2 29.4 Z M655.4 33.4 L657.6 36.2 L655.4 39 L653.2 36.2 Z M649.4 32.8 L651.8 30.6 L654.2 32.8 L651.8 35 Z M656.6 32.8 L659 30.6 L661.4 32.8 L659 35 Z"/></g><g fill="#787878"><path d="M676.2 27 L678 29.6 H674.4 Z M676.2 31.2 L679.6 35 L676.2 38.8 L672.8 35 Z M669.6 32.4 L672.4 30.6 V34.2 Z M682.8 32.4 L680 30.6 V34.2 Z"/><rect x="675.6" y="29" width="1.2" height="3"/><rect x="671.6" y="31.9" width="9.2" height="1.1"/></g><rect x="689.4" y="29.6" width="8.2" height="6.6" fill="#787878"/><path d="M698.4 32.9 L703.2 29.4 V36.4 Z" fill="none" stroke="#787878" stroke-width="1"/><path d="M691.6 29.6 V36.2 M694.2 29.6 V36.2" stroke="#535353" stroke-width="0.6"/></svg>
<svg style="left:1420px;top:25px" width="16" height="16" viewBox="0 0 16 16" fill="none"><circle cx="6.6" cy="6.8" r="4.3" stroke="#e2e2e2" stroke-width="1.5"/><path d="M9.8 10 L13.4 13.6" stroke="#e2e2e2" stroke-width="1.8" stroke-linecap="round"/></svg>
<svg style="left:1444px;top:27.5px" width="14" height="12" viewBox="0 0 14 12" fill="none"><rect x="0.7" y="0.9" width="12.4" height="10" stroke="#e2e2e2" stroke-width="1.4"/><rect x="0.7" y="0.5" width="12.4" height="1.6" fill="#e2e2e2"/><rect x="2.6" y="3.6" width="2.2" height="5.6" fill="#e2e2e2"/></svg>
<svg style="left:1464px;top:31px" width="7" height="5" viewBox="0 0 7 5"><path d="M0.7 0.8 L3.5 3.8 L6.3 0.8" fill="none" stroke="#a8a8a8" stroke-width="1.1"/></svg>
<svg style="left:1479.5px;top:25.5px" width="13" height="14" viewBox="0 0 13 14" fill="none"><path d="M3.6 5 H1 V13 H12 V5 H9.4" stroke="#e2e2e2" stroke-width="1.6"/><path d="M6.5 9.6 V2.2" stroke="#e2e2e2" stroke-width="1.6"/><path d="M3.4 3.8 L6.5 0.4 L9.6 3.8 Z" fill="#e2e2e2"/></svg>
<svg style="left:1283px;top:56px" width="27" height="180" viewBox="1283 56 27 180" fill="none"><rect x="1289.6" y="67.6" width="4.6" height="12.4" fill="#e4e4e4"/><rect x="1290.8" y="69" width="2.2" height="2.2" fill="#535353"/><rect x="1290.8" y="72.7" width="2.2" height="2.2" fill="#535353"/><rect x="1290.8" y="76.4" width="2.2" height="2.2" fill="#535353"/><path d="M1297.6 69.4 Q1302.6 70.4 1301.6 75.4 Q1300.8 78.2 1297.4 79.4" stroke="#e4e4e4" stroke-width="1.5"/><path d="M1295.4 70 L1299.4 67 L1299.6 72 Z" fill="#e4e4e4"/><path d="M1290.8 90.2 L1302.6 95.6 L1290.8 101 Z" fill="#e4e4e4"/><circle cx="1295.3" cy="127.3" r="5.9" stroke="#e4e4e4" stroke-width="1.4"/><rect x="1294.6" y="126.2" width="1.5" height="4.6" fill="#e4e4e4"/><circle cx="1295.35" cy="124.2" r="0.95" fill="#e4e4e4"/><path d="M1302.2 151.4 Q1303.2 151.8 1302.6 153 L1297 160.6 L1295.2 159.4 Z" fill="#e4e4e4"/><path d="M1294.6 160.2 L1296.4 161.4 Q1295.8 164.2 1291.4 165 Q1293.2 162.8 1294.6 160.2 Z" fill="#e4e4e4"/><path d="M1289 152.6 H1293.6 M1289 154.8 H1293.6 M1289 157 H1293.6" stroke="#e4e4e4" stroke-width="1.1"/><path d="M1290 151.8 V153.4 M1292.6 154 V155.6 M1290.6 156.2 V157.8" stroke="#e4e4e4" stroke-width="1.2"/><path d="M1288.4 173.6 H1302.8" stroke="#e4e4e4" stroke-width="1.6"/><ellipse cx="1291.4" cy="173.6" rx="2.6" ry="1.9" fill="#e4e4e4"/><path d="M1288.4 182 H1298" stroke="#e4e4e4" stroke-width="1.6"/><path d="M1298 179.4 Q1302.8 178.8 1303 182.4 Q1303 186 1298 185 Z" fill="#e4e4e4"/><path d="M1298.2 206.4 Q1301 206.4 1301 209 Q1301 210.4 1300 211.4 V213.6 H1303.4 V216.4 H1293 V213.6 H1296.4 V211.4 Q1295.4 210.4 1295.4 209 Q1295.4 206.4 1298.2 206.4 Z" fill="#e4e4e4"/><path d="M1293 218.4 H1303.4" stroke="#e4e4e4" stroke-width="1.3"/><path d="M1288.6 207 H1292.8 M1288.6 209.2 H1292.8 M1288.6 211.4 H1292.8" stroke="#e4e4e4" stroke-width="1.1"/><path d="M1289.6 206.2 V207.8 M1291.8 208.4 V210 M1290.2 210.6 V212.2" stroke="#e4e4e4" stroke-width="1.2"/></svg>
<svg style="left:1335px;top:348px" width="120" height="60" viewBox="1335 348 120 60" fill="none"><circle cx="1355" cy="356.6" r="3.5" stroke="#e0e0e0" stroke-width="1.1"/><path d="M1355 353.1 A3.5 3.5 0 0 1 1355 360.1 Z" fill="#e0e0e0"/><circle cx="1360.90" cy="356.60" r="0.85" fill="#e0e0e0"/><circle cx="1359.17" cy="360.77" r="0.85" fill="#e0e0e0"/><circle cx="1355.00" cy="362.50" r="0.85" fill="#e0e0e0"/><circle cx="1350.83" cy="360.77" r="0.85" fill="#e0e0e0"/><circle cx="1349.10" cy="356.60" r="0.85" fill="#e0e0e0"/><circle cx="1350.83" cy="352.43" r="0.85" fill="#e0e0e0"/><circle cx="1355.00" cy="350.70" r="0.85" fill="#e0e0e0"/><circle cx="1359.17" cy="352.43" r="0.85" fill="#e0e0e0"/><path d="M1367 360.6 V356 L1368.4 353.4 L1369.6 357 L1371 352.4 L1372.4 356.4 L1373.8 351.6 L1375.2 355.8 L1376.8 352 L1378.2 356.6 L1379.6 353.2 L1381 356.4 L1381.8 355 V360.6 Z" fill="#e0e0e0"/><rect x="1387.15" y="351.55" width="11.7" height="9.3" stroke="#e0e0e0" stroke-width="1.1"/><path d="M1386.6 354.4 H1399.4 M1386.6 357.8 H1399.4 M1390.8 351 V361.4 M1395 351 V361.4" stroke="#e0e0e0" stroke-width="0.7"/><path d="M1387.4 360.6 Q1394 360 1395 355.6 Q1395.6 352.4 1398.8 351.8" stroke="#e0e0e0" stroke-width="1.1"/><rect x="1405.95" y="352.35" width="11.7" height="9.1" stroke="#e0e0e0" stroke-width="1.1"/><path d="M1406 361.4 L1417.6 352.4 V361.4 Z" fill="#e0e0e0"/><path d="M1407.6 354.6 H1410.4 M1409 353.2 V356" stroke="#e0e0e0" stroke-width="0.8"/><path d="M1413.4 359.2 H1416.4" stroke="#535353" stroke-width="0.8"/><path d="M1425.2 352.6 H1435.4 L1430.3 361.8 Z" stroke="#e0e0e0" stroke-width="1.3"/><path d="M1428.2 355.2 H1432.4 L1430.3 359 Z" fill="#8a8a8a"/><rect x="1340.35" y="372.55" width="11.7" height="9.7" stroke="#e0e0e0" stroke-width="1.1"/><rect x="1341.2" y="373.4" width="10" height="2.8" fill="#e0e0e0"/><path d="M1343.2 373.4 V376.2 M1345.4 373.4 V376.2 M1347.6 373.4 V376.2 M1349.6 373.4 V376.2" stroke="#333" stroke-width="0.9"/><defs><linearGradient id="hg" x1="0" x2="1"><stop offset="0" stop-color="#111"/><stop offset="1" stop-color="#e8e8e8"/></linearGradient><linearGradient id="hg2" x1="0" x2="1"><stop offset="0" stop-color="#222"/><stop offset="1" stop-color="#e0e0e0"/></linearGradient></defs><rect x="1341.2" y="377.8" width="10" height="3.6" fill="url(#hg)"/><path d="M1360.2 375.4 L1364.8 373.4 L1369.4 375.4" stroke="#e0e0e0" stroke-width="1.1"/><circle cx="1364.8" cy="373.2" r="1" fill="#e0e0e0"/><path d="M1360.4 375.6 L1358.4 379.8 M1360.4 375.6 L1362.4 379.8 M1369.2 375.6 L1367.2 379.8 M1369.2 375.6 L1371.2 379.8" stroke="#e0e0e0" stroke-width="0.8"/><path d="M1357.8 379.6 H1363 Q1363 382.6 1360.4 382.6 Q1357.8 382.6 1357.8 379.6 Z M1366.6 379.6 H1371.8 Q1371.8 382.6 1369.2 382.6 Q1366.6 382.6 1366.6 379.6 Z" fill="#e0e0e0"/><rect x="1377.55" y="372.55" width="12.1" height="9.7" stroke="#e0e0e0" stroke-width="1.1"/><rect x="1383.6" y="372.6" width="6.2" height="9.8" fill="#e0e0e0"/><rect x="1378.4" y="373.4" width="4.8" height="8" fill="#3a3a3a"/><path d="M1395 374.6 H1397.8 L1398.8 373 H1402.6 L1403.6 374.6 H1406.4 V381.8 H1395 Z" fill="#e0e0e0"/><circle cx="1400.6" cy="378" r="2.2" fill="#e0e0e0" stroke="#e0e0e0" stroke-width="0.1"/><circle cx="1400.6" cy="378" r="2.2" fill="#535353"/><circle cx="1400.6" cy="378" r="1.1" fill="#e0e0e0"/><circle cx="1405.8" cy="381.6" r="2.6" fill="#535353" stroke="#e0e0e0" stroke-width="1.1"/><circle cx="1420.8" cy="376.4" r="3.9" fill="#9a9a9a"/><circle cx="1417.8" cy="380" r="3.9" fill="#d8d8d8" opacity="0.9"/><circle cx="1423.8" cy="380" r="3.9" fill="#e8e8e8" opacity="0.85"/><circle cx="1420.8" cy="378.6" r="1.6" fill="#6a6a6a"/><rect x="1433.4" y="372" width="12.8" height="10.8" fill="#e0e0e0"/><rect x="1434.8" y="373.4" width="2.6" height="2" fill="#2e2e2e"/><rect x="1434.8" y="376.6" width="2.6" height="2" fill="#2e2e2e"/><rect x="1434.8" y="379.8" width="2.6" height="2" fill="#2e2e2e"/><rect x="1438.6" y="373.4" width="2.6" height="2" fill="#2e2e2e"/><rect x="1438.6" y="376.6" width="2.6" height="2" fill="#2e2e2e"/><rect x="1438.6" y="379.8" width="2.6" height="2" fill="#2e2e2e"/><rect x="1442.4" y="373.4" width="2.6" height="2" fill="#2e2e2e"/><rect x="1442.4" y="376.6" width="2.6" height="2" fill="#2e2e2e"/><rect x="1442.4" y="379.8" width="2.6" height="2" fill="#2e2e2e"/><rect x="1349.55" y="393.35" width="11.7" height="10.1" stroke="#e0e0e0" stroke-width="1.1"/><path d="M1350.2 403 L1360.8 393.8 V403 Z" fill="#e0e0e0"/><ellipse cx="1355.4" cy="398.4" rx="4" ry="2.3" transform="rotate(-40 1355.4 398.4)" fill="#535353"/><path d="M1352.2 401.2 A4 2.3 -40 0 0 1358.6 395.6 L1360.8 393.8 V403 L1350.2 403 Z" fill="none"/><path d="M1352.4 401 Q1350.6 398 1354 395.6 Q1357 393.8 1358.6 395.8 Z" fill="#e0e0e0"/><rect x="1368.55" y="393.35" width="11.9" height="10.1" stroke="#e0e0e0" stroke-width="1.1"/><path d="M1369 399.6 L1376.6 393.6 H1380 V396 L1371.4 403 H1369 Z" fill="#9c9c9c"/><path d="M1369 402.8 L1380 394.2" stroke="#e0e0e0" stroke-width="0.9"/><rect x="1387.15" y="393.35" width="11.7" height="10.1" stroke="#e0e0e0" stroke-width="1.1"/><path d="M1387.4 403.2 V400 L1389.6 400.6 L1391 398 L1392.6 399 L1394.2 396.2 L1396 397 L1398.6 394.2 V403.2 Z" fill="#e0e0e0"/><path d="M1387.6 399.4 L1389.8 399.8 L1391 397.4 L1392.6 398.4 L1394.2 395.6 L1396 396.4 L1398.4 393.8" stroke="#2a2a2a" stroke-width="1.3"/><rect x="1405.55" y="393.35" width="12.1" height="10.1" stroke="#e0e0e0" stroke-width="1.1"/><path d="M1405.8 393.6 L1411.6 398.4 L1417.4 393.6 Z" fill="#e0e0e0"/><path d="M1405.8 403.2 L1411.6 398.4 L1417.4 403.2 Z" fill="#b0b0b0"/><path d="M1405.8 393.6 L1411.6 398.4 L1405.8 403.2 Z" fill="#7a7a7a"/><rect x="1424.35" y="393.35" width="12.1" height="10.1" stroke="#e0e0e0" stroke-width="1.1"/><rect x="1425" y="394" width="10.8" height="8.8" fill="url(#hg2)"/></svg>
<svg style="left:1312px;top:590px" width="188" height="235" viewBox="1312 590 188 235" fill="none"><rect x="1392.5" y="598.8" width="9.2" height="7.8" stroke="#e4e4e4" stroke-width="1.1"/><path d="M1393.8 605.4 L1395.6 602.6 L1397 604.2 L1398.4 602.8 L1400.4 605.4 Z" fill="#e4e4e4"/><circle cx="1416.1" cy="603.1" r="3.9" stroke="#e4e4e4" stroke-width="1.1"/><path d="M1413.2 605.8 A3.9 3.9 0 0 0 1418.9 600.3 Z" fill="#e4e4e4"/><path d="M1431 599 H1439.4 V601.4 H1438.4 Q1438.2 600.4 1437.4 600.4 H1436.2 V605.6 Q1436.2 606.2 1437.4 606.2 V607.2 H1433 V606.2 Q1434.2 606.2 1434.2 605.6 V600.4 H1433 Q1432.2 600.4 1432 601.4 H1431 Z" fill="#e4e4e4"/><rect x="1450.4" y="600" width="6.2" height="6" stroke="#e4e4e4" stroke-width="1.2"/><rect x="1448.8" y="598.5" width="2.4" height="2.4" fill="#e4e4e4"/><rect x="1455.8" y="598.5" width="2.4" height="2.4" fill="#e4e4e4"/><rect x="1448.8" y="605.1" width="2.4" height="2.4" fill="#e4e4e4"/><rect x="1455.8" y="605.1" width="2.4" height="2.4" fill="#e4e4e4"/><path d="M1471 598.4 H1474.6 L1477 600.8 V607.4 H1474.6" stroke="#e4e4e4" stroke-width="1.1"/><path d="M1474.2 598.4 V601.2 H1477" stroke="#e4e4e4" stroke-width="0.9"/><rect x="1468.4" y="602.4" width="5.4" height="5" fill="#e4e4e4"/><rect x="1470" y="604" width="2.2" height="1.8" fill="#535353"/><rect x="1487" y="598" width="5.8" height="9.4" rx="1.2" fill="#3e3e3e"/><circle cx="1489.9" cy="598.4" r="3" fill="#eeeeee"/><rect x="1343.2" y="641.6" width="8.6" height="9.2" fill="#e4e4e4"/><rect x="1344.5" y="643" width="2.1" height="2.1" fill="#3a3a3a"/><rect x="1348.3" y="643" width="2.1" height="2.1" fill="#3a3a3a"/><rect x="1346.4" y="645.2" width="2.1" height="2.1" fill="#3a3a3a"/><rect x="1344.5" y="647.4" width="2.1" height="2.1" fill="#3a3a3a"/><rect x="1348.3" y="647.4" width="2.1" height="2.1" fill="#3a3a3a"/><path d="M1368 640.8 Q1369.8 641.2 1369.2 642.8 L1365.2 649 L1362.8 647.4 Z" fill="#e4e4e4"/><path d="M1362.2 648.2 L1364.6 649.8 Q1363.8 652 1360 652.4 Q1361.2 650.6 1362.2 648.2 Z" fill="#e4e4e4"/><g transform="translate(1376.8,641.2) scale(0.74)"><path d="M6.5 0 L8.8 2.8 H7.2 V5.8 H10.2 V4.2 L13 6.5 L10.2 8.8 V7.2 H7.2 V10.2 H8.8 L6.5 13 L4.2 10.2 H5.8 V7.2 H2.8 V8.8 L0 6.5 L2.8 4.2 V5.8 H5.8 V2.8 H4.2 Z" fill="#e4e4e4"/></g><path d="M1396.8 641.8 V649.6 H1404.2 M1394.4 644.2 H1400.6 L1402.2 645.8 V652" stroke="#e4e4e4" stroke-width="1.2"/><path d="M1402.4 642.4 L1403.6 641.2" stroke="#e4e4e4" stroke-width="0.9"/><rect x="1412.4" y="645.4" width="8.4" height="5.8" fill="#e4e4e4"/><path d="M1414.2 645.6 V644 Q1414.2 641.9 1416.6 641.9 Q1419 641.9 1419 644 V645.6" stroke="#e4e4e4" stroke-width="1.3"/><rect x="1416" y="647.2" width="1.3" height="2" fill="#535353"/><rect x="1341.6" y="808" width="5.6" height="4.4" rx="2.2" stroke="#8a8a8a" stroke-width="1.1"/><rect x="1346.2" y="808" width="5.6" height="4.4" rx="2.2" stroke="#8a8a8a" stroke-width="1.1"/><path d="M1384 805.8 H1393 V813.2 H1384 Z" fill="#e4e4e4"/><circle cx="1388.5" cy="809.5" r="2.4" fill="#535353"/><circle cx="1410.2" cy="810" r="3.9" stroke="#e4e4e4" stroke-width="1.1"/><path d="M1407.3 812.7 A3.9 3.9 0 0 0 1413 807.2 Z" fill="#e4e4e4"/><path d="M1413.6 814.4 H1416.4 L1415 816 Z" fill="#e4e4e4"/><path d="M1426.4 806.6 Q1426.4 805.8 1427.2 805.8 H1430 L1431 807 H1435 Q1435.8 807 1435.8 807.8 V813.6 H1426.4 Z" fill="#e4e4e4"/><rect x="1448.2" y="805.6" width="8.4" height="8.4" stroke="#e4e4e4" stroke-width="1.1"/><path d="M1452.4 807.6 V812 M1450.2 809.8 H1454.6" stroke="#e4e4e4" stroke-width="1.1"/><path d="M1468.6 807.2 H1476.6 M1471 807.2 V805.8 H1474.2 V807.2" stroke="#e4e4e4" stroke-width="1.1"/><path d="M1469.4 808.4 H1475.8 V814.4 H1469.4 Z" fill="none" stroke="#e4e4e4" stroke-width="1.1"/><path d="M1471.4 809.8 V813 M1473.8 809.8 V813" stroke="#e4e4e4" stroke-width="0.8"/><path d="M1372.6 816.2 H1375.4 L1374 817.8 Z" fill="#e4e4e4"/></svg>
<span class="t" style="left:1362.80px;top:804.63px;font-size:10.50px;line-height:10.50px;color:#e4e4e4;-webkit-text-stroke:0.22px #e4e4e4;letter-spacing:0.216px;font-style:italic;font-family:"Liberation Serif",serif;">fx</span>
<svg style="left:346px;top:400px" width="160" height="24" viewBox="346 400 160 24" fill="none"><rect x="357" y="405.4" width="1.1" height="12" fill="#a8a8a8"/><rect x="359" y="408" width="5" height="2.6" fill="#a8a8a8"/><rect x="359" y="412.4" width="9.2" height="2.8" fill="#a8a8a8"/><rect x="384.8" y="405.4" width="1.1" height="12" fill="#a8a8a8"/><rect x="382" y="408" width="6.8" height="2.6" fill="#a8a8a8"/><rect x="380.5" y="412.4" width="9.7" height="2.8" fill="#a8a8a8"/><rect x="411.9" y="405.4" width="1.1" height="12" fill="#a8a8a8"/><rect x="405" y="408" width="6" height="2.6" fill="#a8a8a8"/><rect x="401.8" y="412.4" width="9.2" height="2.8" fill="#a8a8a8"/><rect x="438.5" y="405.6" width="10.9" height="1.1" fill="#a8a8a8"/><rect x="440" y="407.8" width="3.2" height="9" fill="#a8a8a8"/><rect x="444.6" y="407.8" width="3.3" height="6" fill="#a8a8a8"/><rect x="460.6" y="410.8" width="11.6" height="1.1" fill="#a8a8a8"/><rect x="463.2" y="406.4" width="3.2" height="10" fill="#a8a8a8"/><rect x="467.9" y="408.6" width="3.3" height="5.4" fill="#a8a8a8"/><rect x="483.4" y="416" width="11.6" height="1.1" fill="#a8a8a8"/><rect x="485.2" y="406.4" width="3.2" height="8.8" fill="#a8a8a8"/><rect x="489.9" y="409.4" width="3.3" height="5.8" fill="#a8a8a8"/></svg>
<div class="b" style="left:0px;top:821px;width:1500px;height:23px;background:#1f3b47;background:linear-gradient(90deg,#203c48 0%,#203a48 30%,#1d3148 55%,#192845 75%,#172243 100%);"></div>
<svg style="left:7px;top:825.5px" width="14" height="14" viewBox="0 0 14 14"><path d="M0 2 L6.2 1.1 V6.6 H0 Z M7 1 L14 0 V6.6 H7 Z M0 7.4 H6.2 V12.9 L0 12 Z M7 7.4 H14 V14 L7 13 Z" fill="#fff"/></svg>
<svg style="left:35px;top:825px" width="15" height="15" viewBox="0 0 15 15"><circle cx="9.6" cy="5.2" r="3.9" fill="none" stroke="#fff" stroke-width="1.4"/><path d="M6.8 8 L0.8 14" stroke="#fff" stroke-width="1.5"/></svg>
<svg style="left:63px;top:825px" width="14" height="14" viewBox="0 0 14 14"><circle cx="7" cy="7" r="5.4" fill="none" stroke="#fff" stroke-width="1.8"/></svg>
<svg style="left:92px;top:825.5px" width="14" height="13" viewBox="0 0 14 13"><rect x="1.6" y="3.2" width="7" height="6.4" fill="none" stroke="#fff" stroke-width="1.3"/><path d="M0.6 0.8 V2 M0.6 10.8 V12.2 M9.6 0.8 V2 M9.6 10.8 V12.2 M0.6 1.4 H9.6 M0.6 11.6 H9.6" stroke="#fff" stroke-width="1.2" fill="none"/><path d="M12.4 0.6 V12.4" stroke="#fff" stroke-width="1.2"/><circle cx="12.4" cy="5" r="1.4" fill="#fff"/></svg>
<svg style="left:121px;top:824.5px" width="15" height="15" viewBox="0 0 15 15"><defs><linearGradient id="edg" x1="0" y1="0" x2="1" y2="1"><stop offset="0" stop-color="#35c1f1"/><stop offset="0.5" stop-color="#1b8bd8"/><stop offset="1" stop-color="#0c59a4"/></linearGradient><linearGradient id="edg2" x1="0" y1="0" x2="1" y2="0"><stop offset="0" stop-color="#2fbf6f"/><stop offset="1" stop-color="#7ad84a"/></linearGradient></defs><circle cx="7.5" cy="7.5" r="7" fill="url(#edg)"/><path d="M1 9 Q0.5 3 6 1.2 Q12 0 14.3 5.5 Q14.6 8 12.5 8.6 H8.6 Q9.4 6.4 7.4 5.6 Q4.8 5.2 3.6 7.6 Q3 10.6 5.4 13.2 Q1.8 12.6 1 9 Z" fill="url(#edg2)" opacity="0.9"/><path d="M3.6 7.6 Q4.8 5.2 7.4 5.6 Q9.4 6.4 8.6 8.6 Q8.2 10 9.6 11 Q11.6 12 13.6 10.4 Q12 14.4 7.5 14.5 Q3 13 3.6 7.6 Z" fill="#0f5fae"/></svg>
<svg style="left:151px;top:825.5px" width="14" height="13" viewBox="0 0 14 13"><path d="M0 1.4 Q0 0.6 0.8 0.6 H4.6 L5.8 2 H13.2 Q14 2 14 2.8 V11.4 H0 Z" fill="#f2b83a"/><path d="M0 3.6 H14 V11.6 Q14 12.4 13.2 12.4 H0.8 Q0 12.4 0 11.6 Z" fill="#fbd869"/><path d="M3 7.2 H11 V12.4 H3 Z" fill="#3a96dd"/><path d="M4.6 9 H9.4 V12.4 H4.6 Z" fill="#fbd869"/></svg>
<svg style="left:180px;top:824.5px" width="13" height="15" viewBox="0 0 13 15"><path d="M4 4 V2.6 Q4 0.8 6.5 0.8 Q9 0.8 9 2.6 V4" fill="none" stroke="#f4f4f4" stroke-width="1.2"/><path d="M0.4 3.8 H12.6 V13.4 Q12.6 14.4 11.6 14.4 H1.4 Q0.4 14.4 0.4 13.4 Z" fill="#f4f4f4"/><rect x="3.2" y="6" width="2.8" height="2.8" fill="#f25022"/><rect x="7" y="6" width="2.8" height="2.8" fill="#7fba00"/><rect x="3.2" y="9.8" width="2.8" height="2.8" fill="#00a4ef"/><rect x="7" y="9.8" width="2.8" height="2.8" fill="#ffb900"/></svg>
<svg style="left:208.5px;top:827px" width="14" height="11" viewBox="0 0 14 11"><rect x="0" y="0.4" width="14" height="10.4" rx="0.8" fill="#2a9be6"/><path d="M0 1 L7 6.4 L14 1 V0.4 H0 Z" fill="#8fd2fb"/><path d="M0 2.2 L7 7.6 L14 2.2 V10 Q14 10.8 13.2 10.8 H0.8 Q0 10.8 0 10 Z" fill="#1c86d6"/></svg>
<div class="b" style="left:230.5px;top:821px;width:124.5px;height:23px;background:#3f5862;"></div>
<div class="b" style="left:230.5px;top:842px;width:124.5px;height:2px;background:#8cc0e6;"></div>
<div class="b" style="left:236.5px;top:826px;width:12px;height:12px;background:#0a1e36;border-radius:2px;"></div>
<span class="t" style="left:238.40px;top:828.08px;font-size:7.40px;line-height:7.40px;color:#31a8ff;font-weight:bold;-webkit-text-stroke:0.2px #31a8ff;letter-spacing:-0.426px;">Ps</span>
<span class="t" style="left:252.00px;top:827.70px;font-size:10.00px;line-height:10.00px;color:#ffffff;-webkit-text-stroke:0.22px #ffffff;letter-spacing:-0.510px;">shutterstock_1839898...</span>
<svg style="left:1357.5px;top:829px" width="10" height="6" viewBox="0 0 10 6"><path d="M0.6 5.4 L5 1 L9.4 5.4" fill="none" stroke="#fff" stroke-width="1.2"/></svg>
<svg style="left:1374.5px;top:827.5px" width="14" height="9" viewBox="0 0 14 9"><path d="M3.2 8.6 Q0.4 8.6 0.4 6.2 Q0.4 4.2 2.6 4 Q3.2 1.6 5.8 1.4 Q7.4 0 9.4 1.4 Q10.6 2.2 10.8 3.6 Q13.6 3.8 13.6 6.2 Q13.6 8.6 11 8.6 Z" fill="#f0f0f0"/></svg>
<svg style="left:1394px;top:828px" width="13" height="8" viewBox="0 0 13 8"><rect x="0.6" y="0.6" width="10.6" height="6.8" rx="0.8" fill="none" stroke="#fff" stroke-width="1.1"/><rect x="1.8" y="1.8" width="4.4" height="4.4" fill="#fff"/><rect x="11.6" y="2.6" width="1.2" height="2.8" fill="#fff"/></svg>
<svg style="left:1414px;top:826px" width="11" height="11" viewBox="0 0 11 11"><g fill="none" stroke="#fff" stroke-width="1.1"><path d="M0.8 10.2 A9.4 9.4 0 0 1 10.2 0.8" opacity="0.9"/><path d="M3.4 10.2 A6.8 6.8 0 0 1 10.2 3.4" opacity="0.9"/><path d="M6 10.2 A4.2 4.2 0 0 1 10.2 6" opacity="0.9"/></g><circle cx="9.4" cy="9.4" r="1.2" fill="#fff"/></svg>
<span class="t" style="left:1432.70px;top:828.12px;font-size:9.20px;line-height:9.20px;color:#ffffff;-webkit-text-stroke:0.22px #ffffff;letter-spacing:-0.345px;">09.17</span>
<svg style="left:1467.5px;top:825.5px" width="13" height="13" viewBox="0 0 13 13"><path d="M0.7 0.7 H12.3 V9.4 H8 L8 12.2 L5.2 9.4 H0.7 Z" fill="#fff"/><path d="M3 3.4 H10 M3 5.2 H10 M3 7 H8" stroke="#1a2946" stroke-width="0.8"/></svg>
<div class="b" style="left:1495.5px;top:821px;width:1px;height:23px;background:#5a6478;"></div>
</body></html>
